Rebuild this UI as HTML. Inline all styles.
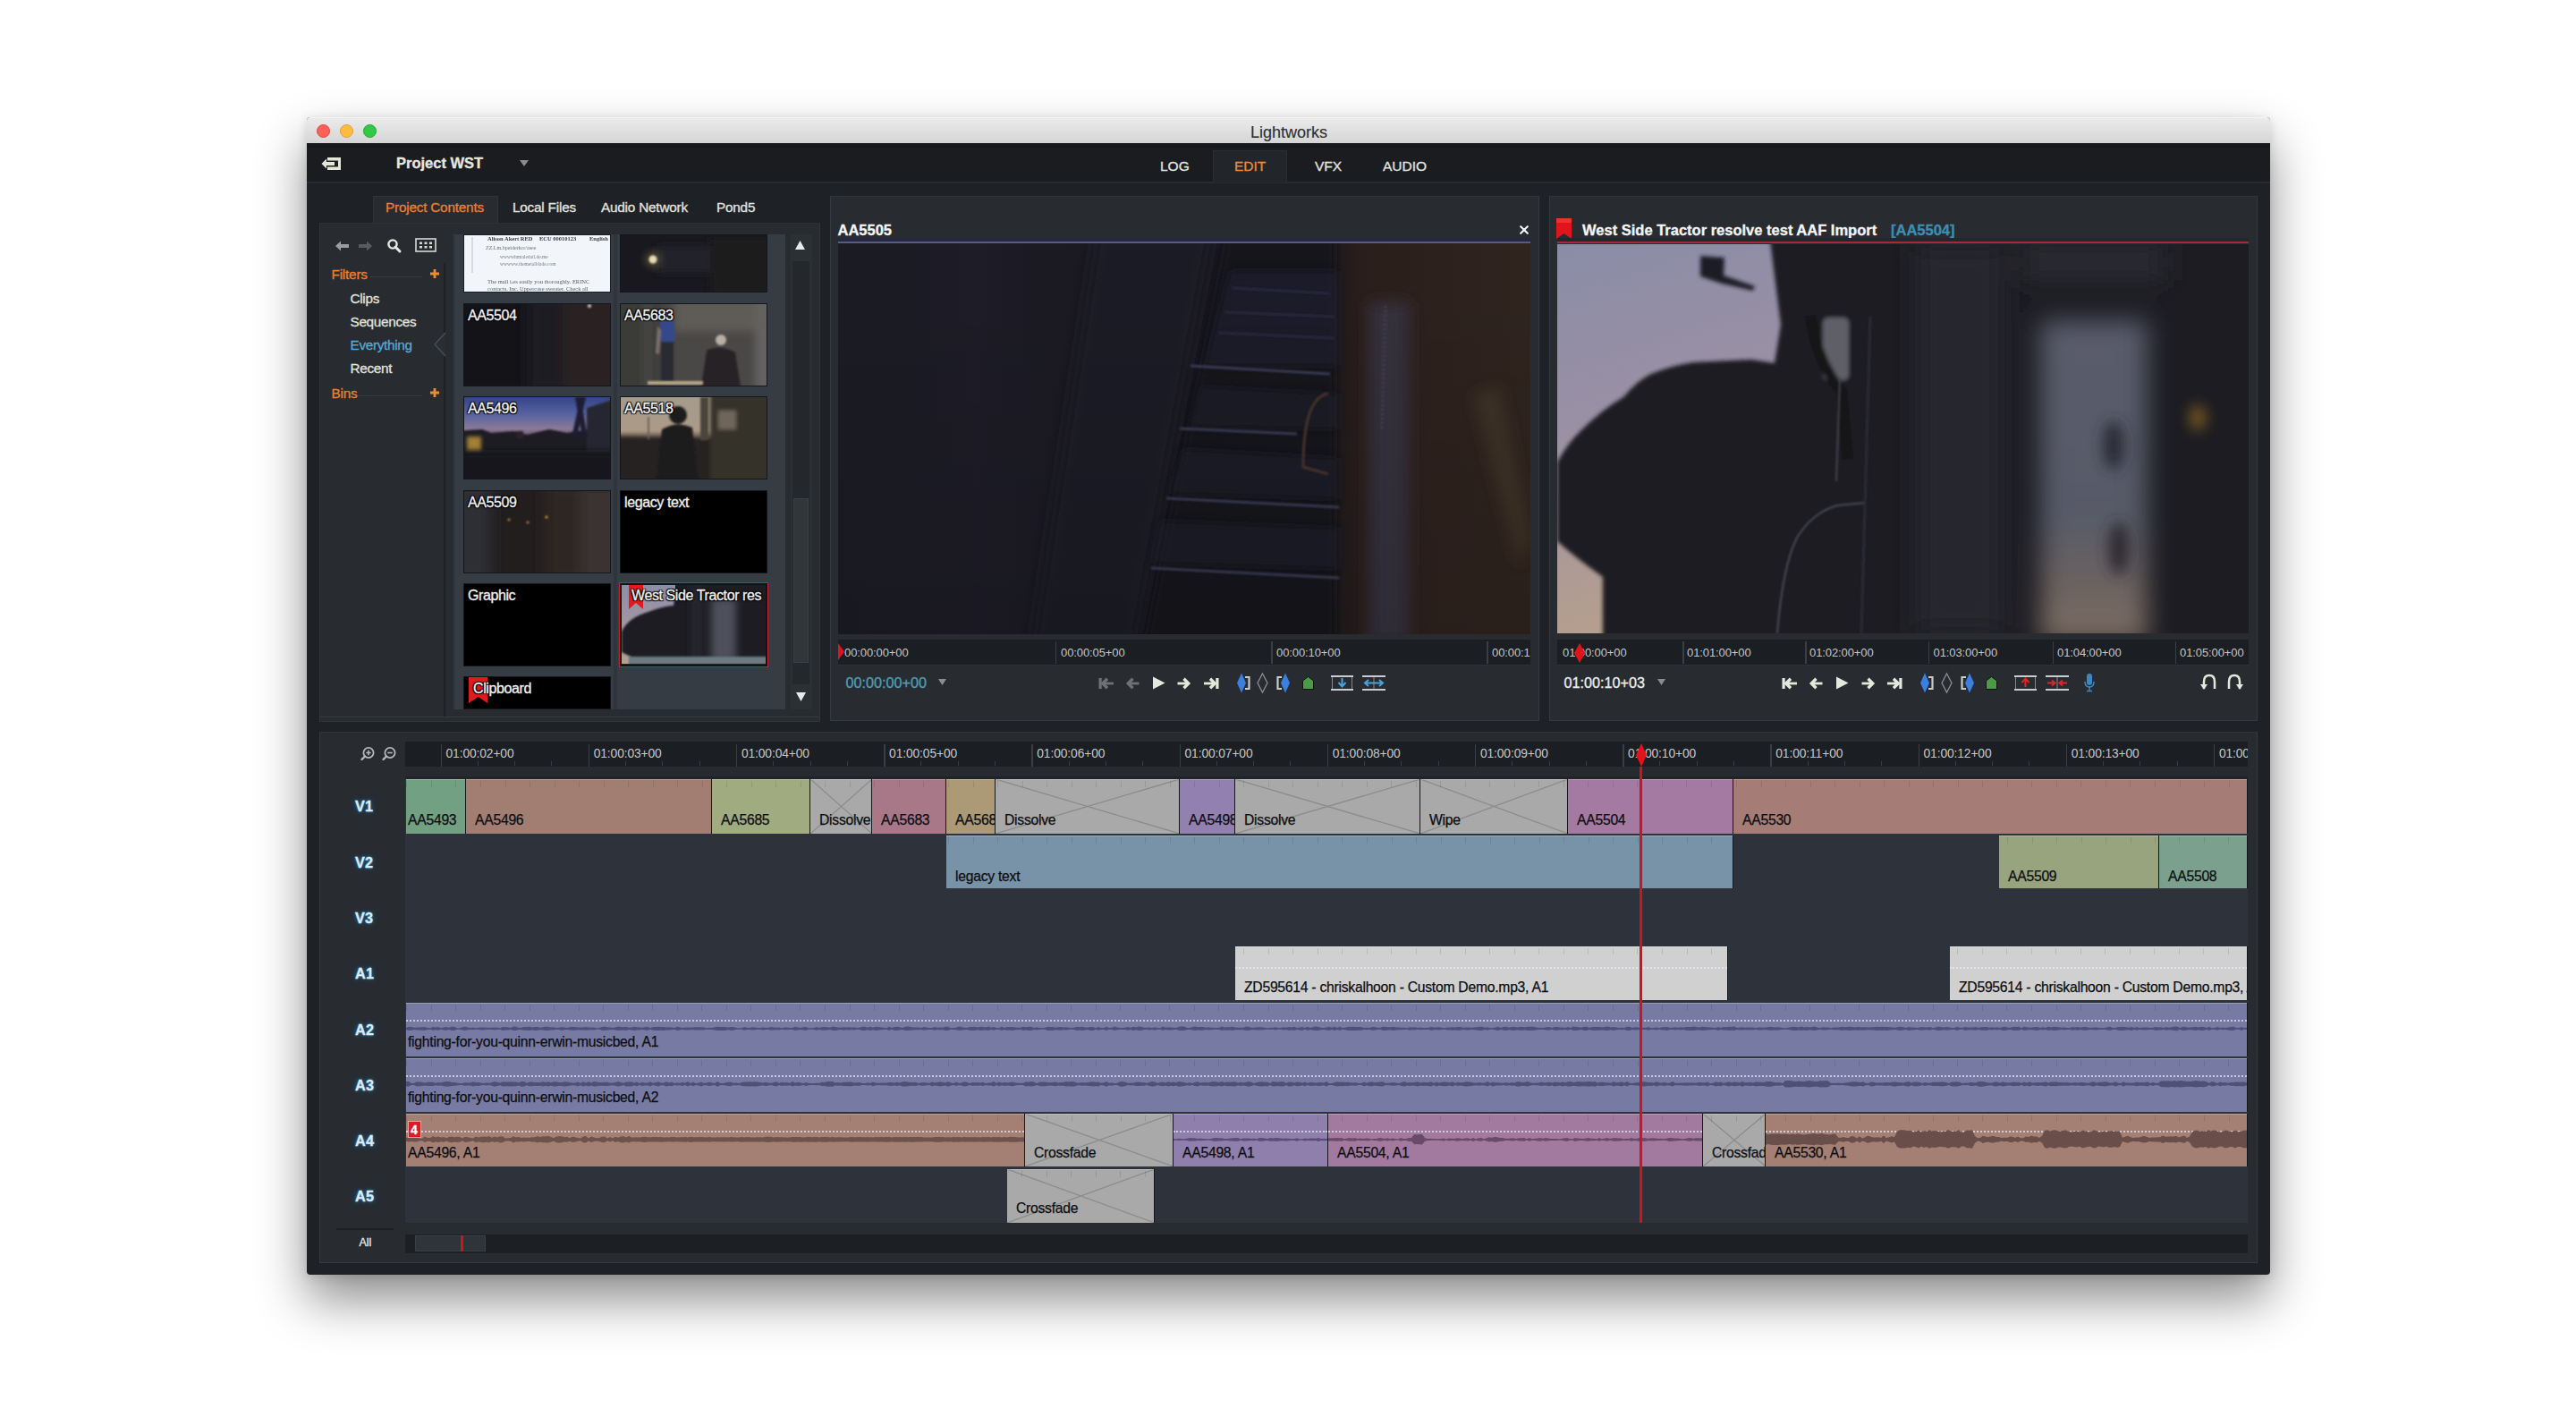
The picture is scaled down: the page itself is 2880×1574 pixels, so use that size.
<!DOCTYPE html><html><head><meta charset="utf-8"><title>Lightworks</title><style>
*{margin:0;padding:0;box-sizing:border-box}
html,body{width:2880px;height:1574px;overflow:hidden;background:#fff;font-family:"Liberation Sans",sans-serif}
.a{position:absolute}
svg.a{overflow:visible}
.t{white-space:nowrap;-webkit-text-stroke-width:0.3px}
.tl{color:#dcebf5;font-weight:bold;letter-spacing:0.3px;text-shadow:0 0 3px #2f8fd0,0 0 6px #1b5f90}
.rl{color:#c4c7c9;letter-spacing:-0.1px;-webkit-text-stroke-width:0}
.th{text-shadow:0 0 2px #000,1px 1px 1px #000,-1px -1px 1px #000,1px -1px 1px #000,-1px 1px 1px #000;color:#f2f2f2}
</style></head><body>
<div class="a" style="left:343px;top:131px;width:2195px;height:1294px;border-radius:4px;background:#1e2125;box-shadow:0 28px 55px rgba(0,0,0,.45),0 2px 12px rgba(0,0,0,.12)"></div>
<div class="a" style="left:343px;top:131px;width:2195px;height:29px;border-radius:4px 4px 0 0;background:linear-gradient(#ebebeb,#d5d5d5);border-top:1px solid #f4f4f4"></div>
<div class="a" style="left:353.5px;top:138.5px;width:15px;height:15px;border-radius:50%;background:#fc605b;border:0.5px solid #e0443e"></div>
<div class="a" style="left:380.0px;top:138.5px;width:15px;height:15px;border-radius:50%;background:#fdbb40;border:0.5px solid #dea236"></div>
<div class="a" style="left:406.0px;top:138.5px;width:15px;height:15px;border-radius:50%;background:#34c84a;border:0.5px solid #1aab29"></div>
<div class="a t " style="left:1398px;top:138.56px;font-size:18px;line-height:18px;color:#303030;-webkit-text-stroke-width:0.15px">Lightworks</div>
<div class="a" style="left:343px;top:160px;width:2195px;height:43px;background:#1a1c20"></div>
<div class="a" style="left:343px;top:160px;width:2195px;height:5px;background:#16181b"></div>
<div class="a" style="left:343px;top:203px;width:2195px;height:2px;background:#282b30"></div>
<svg class="a" style="left:358px;top:173px;" width="26" height="20" viewBox="0 0 26 20"><path d="M8 3 H23 V17 H8 V13.5 H20 V6.5 H8 Z" fill="#e4e6dc"/><path d="M1.5 10 L7 4.5 V8 H16 V12 H7 V15.5 Z" fill="#e4e6dc"/></svg>
<div class="a t " style="left:443px;top:173.53px;font-size:16.5px;line-height:16.5px;color:#e6e8e0;font-weight:bold">Project WST</div>
<svg class="a" style="left:581px;top:179px;" width="10" height="7" viewBox="0 0 10 7"><path d="M0 0 H10 L5 7 Z" fill="#8a8d90"/></svg>
<div class="a" style="left:1356px;top:168px;width:83px;height:36px;background:#22262b;border:1px solid #2a2e33;border-bottom:none"></div>
<div class="a t " style="left:1297px;top:177.88px;font-size:15.5px;line-height:15.5px;color:#e2e4e0">LOG</div>
<div class="a t " style="left:1380px;top:177.88px;font-size:15.5px;line-height:15.5px;color:#ef8a3c">EDIT</div>
<div class="a t " style="left:1470px;top:177.88px;font-size:15.5px;line-height:15.5px;color:#e2e4e0">VFX</div>
<div class="a t " style="left:1546px;top:177.88px;font-size:15.5px;line-height:15.5px;color:#e2e4e0">AUDIO</div>
<div class="a" style="left:417px;top:219px;width:140px;height:31px;background:#282c31;border-top:1px solid #30353a;border-left:1px solid #2e3338;border-right:1px solid #2e3338"></div>
<div class="a t " style="left:431px;top:223.55px;font-size:15.3px;line-height:15.3px;color:#ee7f2d;letter-spacing:-0.2px">Project Contents</div>
<div class="a t " style="left:573px;top:223.55px;font-size:15.3px;line-height:15.3px;color:#e2e4e0;letter-spacing:-0.2px">Local Files</div>
<div class="a t " style="left:672px;top:223.55px;font-size:15.3px;line-height:15.3px;color:#e2e4e0;letter-spacing:-0.2px">Audio Network</div>
<div class="a t " style="left:801px;top:223.55px;font-size:15.3px;line-height:15.3px;color:#e2e4e0;letter-spacing:-0.2px">Pond5</div>
<div class="a" style="left:357px;top:249px;width:560px;height:558px;background:#282c31;border:1px solid #30353a;border-top-color:#2c3136"></div>
<div class="a" style="left:358px;top:801px;width:558px;height:1px;background:#363b40"></div>
<div class="a" style="left:496px;top:294px;width:2px;height:507px;background:#1d2024"></div>
<svg class="a" style="left:374px;top:268px;" width="18" height="14" viewBox="0 0 18 14"><path d="M1 7 L7 1.5 V5 H16 V9 H7 V12.5 Z" fill="#9a9ea2"/></svg>
<svg class="a" style="left:399px;top:268px;" width="18" height="14" viewBox="0 0 18 14"><path d="M17 7 L11 1.5 V5 H2 V9 H11 V12.5 Z" fill="#585c60"/></svg>
<svg class="a" style="left:432px;top:266px;" width="18" height="18" viewBox="0 0 18 18"><circle cx="7" cy="7" r="4.6" fill="none" stroke="#e6e8e4" stroke-width="2.4"/><path d="M10 10 L15 15" stroke="#e6e8e4" stroke-width="3" stroke-linecap="round"/></svg>
<svg class="a" style="left:464px;top:266px;" width="24" height="16" viewBox="0 0 24 16"><rect x="1" y="1" width="22" height="14" fill="none" stroke="#d8dad6" stroke-width="1.6"/><g fill="#d8dad6"><rect x="5" y="4.5" width="3" height="2.5"/><rect x="10.5" y="4.5" width="3" height="2.5"/><rect x="16" y="4.5" width="3" height="2.5"/><rect x="5" y="9" width="3" height="2.5"/><rect x="10.5" y="9" width="3" height="2.5"/><rect x="16" y="9" width="3" height="2.5"/></g></svg>
<div class="a t " style="left:370.5px;top:299.05px;font-size:15.3px;line-height:15.3px;color:#ee7f2d;letter-spacing:-0.2px">Filters</div>
<div class="a" style="left:414px;top:309px;width:58px;height:1px;background:#363b40"></div>
<svg class="a" style="left:481px;top:301px;" width="10" height="10" viewBox="0 0 10 10"><path d="M3.6 0 H6.4 V3.6 H10 V6.4 H6.4 V10 H3.6 V6.4 H0 V3.6 H3.6 Z" fill="#f08a2c"/></svg>
<div class="a t " style="left:391.5px;top:325.55px;font-size:15.3px;line-height:15.3px;color:#e2e4de;letter-spacing:-0.3px">Clips</div>
<div class="a t " style="left:391.5px;top:351.55px;font-size:15.3px;line-height:15.3px;color:#e2e4de;letter-spacing:-0.3px">Sequences</div>
<div class="a t " style="left:391.5px;top:377.55px;font-size:15.3px;line-height:15.3px;color:#58a8d8;letter-spacing:-0.3px">Everything</div>
<div class="a t " style="left:391.5px;top:403.55px;font-size:15.3px;line-height:15.3px;color:#e2e4de;letter-spacing:-0.3px">Recent</div>
<div class="a t " style="left:370.5px;top:432.05px;font-size:15.3px;line-height:15.3px;color:#ee7f2d;letter-spacing:-0.2px">Bins</div>
<div class="a" style="left:400px;top:442px;width:72px;height:1px;background:#363b40"></div>
<svg class="a" style="left:481px;top:434px;" width="10" height="10" viewBox="0 0 10 10"><path d="M3.6 0 H6.4 V3.6 H10 V6.4 H6.4 V10 H3.6 V6.4 H0 V3.6 H3.6 Z" fill="#f08a2c"/></svg>
<svg class="a" style="left:484px;top:371px;" width="14" height="28" viewBox="0 0 14 28"><path d="M14 0 L1 14 L14 28 Z" fill="#2a2e33"/><path d="M14 1 L2 14 L14 27" fill="none" stroke="#4a5056" stroke-width="1.3"/></svg>
<div class="a" style="left:506px;top:262px;width:372px;height:531px;background:#363c43;border-left:2px solid #2c3136"></div>
<div class="a" style="left:686px;top:262px;width:4px;height:531px;background:#2f353b"></div>
<svg width="0" height="0" style="position:absolute"><defs><filter id="b05" filterUnits="userSpaceOnUse" x="-100" y="-100" width="1000" height="700"><feGaussianBlur stdDeviation="0.6"/></filter><filter id="b1" filterUnits="userSpaceOnUse" x="-100" y="-100" width="1000" height="700"><feGaussianBlur stdDeviation="1"/></filter><filter id="b2" filterUnits="userSpaceOnUse" x="-100" y="-100" width="1000" height="700"><feGaussianBlur stdDeviation="2"/></filter><filter id="b4" filterUnits="userSpaceOnUse" x="-100" y="-100" width="1000" height="700"><feGaussianBlur stdDeviation="4"/></filter><filter id="b8" filterUnits="userSpaceOnUse" x="-100" y="-100" width="1000" height="700"><feGaussianBlur stdDeviation="8"/></filter><filter id="b14" filterUnits="userSpaceOnUse" x="-100" y="-100" width="1000" height="700"><feGaussianBlur stdDeviation="14"/></filter></defs></svg>
<div class="a" style="left:518px;top:262px;width:165px;height:65px;overflow:hidden;background:#000;border:1px solid #1a1c1f"><div style="position:absolute;left:0;top:-28px;width:165px;height:93px"><svg width="165" height="93" viewBox="0 0 165 93" style="display:block;background:#f2f5fa"><rect width="165" height="93" fill="#f2f5fa"/><g filter="url(#b05)" font-family="Liberation Serif" fill="#3a4050"><text x="26" y="34" font-size="6.5" font-weight="bold">Alison Akert RED</text><text x="84" y="34" font-size="6.5" font-weight="bold">ECU 00010123</text><text x="140" y="34" font-size="6.5" font-weight="bold">English</text><text x="24" y="44" font-size="6" fill="#6a7080">ZZ.Lm.bpeiderkcr/asee</text><text x="40" y="54" font-size="5.5" fill="#7a8090">wwwwhmtaledatl.de.me</text><text x="40" y="62" font-size="5.5" fill="#7a8090">wwwww.themetalblade.com</text><text x="26" y="82" font-size="6.5" fill="#5a6070">The mail i.es easily you thoroughly. ERINC</text><text x="26" y="90" font-size="6.5" fill="#5a6070">contacts. Inc. Uppercase sweater. Check all</text></g><rect x="8" y="30" width="2" height="40" fill="#d8dce2"/></svg></div></div>
<div class="a" style="left:693px;top:262px;width:165px;height:65px;overflow:hidden;background:#000;border:1px solid #141619"><div style="position:absolute;left:0;top:-28px;width:165px;height:93px"><svg width="165" height="93" viewBox="0 0 165 93" style="display:block;background:#000"><rect width="165" height="93" fill="#18181e"/><g filter="url(#b4)"><rect x="40" y="40" width="60" height="30" fill="#22222c"/><rect x="100" y="30" width="75" height="75" fill="#1c1a1e"/></g><circle cx="36" cy="55" r="4.5" fill="#fff8d8" filter="url(#b1)"/><circle cx="36" cy="55" r="9" fill="#b0a060" opacity=".35" filter="url(#b4)"/></svg></div></div>
<div class="a" style="left:518px;top:338.5px;width:165px;height:93.0px;overflow:hidden;background:#000;border:1px solid #141619"><div style="position:absolute;left:0;top:0.0px;width:165px;height:93px"><svg width="165" height="93" viewBox="0 0 165 93" style="display:block;background:#000"><rect width="165" height="93" fill="#141318"/><g filter="url(#b8)"><rect x="70" y="-10" width="40" height="110" fill="#1c1b20"/><rect x="110" y="-10" width="75" height="110" fill="#2a2220"/></g><circle cx="140" cy="2" r="2" fill="#d8d0b0" filter="url(#b1)"/></svg></div></div>
<div class="a t th" style="left:523px;top:344.96px;font-size:16px;line-height:16px;letter-spacing:-0.4px">AA5504</div>
<div class="a" style="left:693px;top:338.5px;width:165px;height:93.0px;overflow:hidden;background:#000;border:1px solid #141619"><div style="position:absolute;left:0;top:0.0px;width:165px;height:93px"><svg width="165" height="93" viewBox="0 0 165 93" style="display:block;background:#000"><rect width="165" height="93" fill="#4a4846"/><g filter="url(#b4)"><rect x="-15" y="-10" width="40" height="115" fill="#3a3a38"/><rect x="60" y="-15" width="120" height="45" fill="#5e5c58"/><rect x="150" y="-10" width="30" height="113" fill="#646260"/><rect x="33" y="-10" width="14" height="113" fill="#3e3e3c"/></g><g filter="url(#b1)"><rect x="44" y="18" width="16" height="24" rx="3" fill="#34488a"/><path d="M41 24 L39 55 L43 56 L45 30 Z" fill="#7a7068"/><rect x="45" y="42" width="14" height="45" fill="#2c2c32"/><circle cx="112" cy="40" r="6" fill="#b8b0a4"/><path d="M96 52 Q110 44 128 54 L134 92 L90 92 Z" fill="#262428"/></g><rect x="30" y="86" width="62" height="4" fill="#b8a888" filter="url(#b1)"/></svg></div></div>
<div class="a t th" style="left:698px;top:344.96px;font-size:16px;line-height:16px;letter-spacing:-0.4px">AA5683</div>
<div class="a" style="left:518px;top:443px;width:165px;height:93px;overflow:hidden;background:#000;border:1px solid #141619"><div style="position:absolute;left:0;top:0px;width:165px;height:93px"><svg width="165" height="93" viewBox="0 0 165 93" style="display:block;background:#000"><defs><linearGradient id="g5496" x1="0" y1="0" x2="0" y2="1"><stop offset="0" stop-color="#34458a"/><stop offset=".22" stop-color="#5a64a0"/><stop offset=".38" stop-color="#8a7a98"/><stop offset=".48" stop-color="#6a5868"/><stop offset=".6" stop-color="#221e26"/></linearGradient></defs><rect width="165" height="93" fill="url(#g5496)"/><g filter="url(#b1)"><path d="M-10 38 L20 36 L30 40 L55 38 L70 42 L95 36 L115 40 L175 30 L175 103 L-10 103 Z" fill="#1e1a22"/><path d="M137 12 L175 0 L175 60 L137 60 Z" fill="#282630"/><path d="M124 0 L130 0 L138 45 L132 45 Z" fill="#1c1c30"/><path d="M130 0 L136 0 L126 45 L120 45 Z" fill="#1c1c30"/><rect x="58" y="38" width="8" height="8" fill="#2a2228"/></g><rect x="3" y="44" width="16" height="16" fill="#d0a040" opacity=".75" filter="url(#b2)"/><rect x="-10" y="62" width="185" height="40" fill="#18161c" filter="url(#b4)"/></svg></div></div>
<div class="a t th" style="left:523px;top:449.46px;font-size:16px;line-height:16px;letter-spacing:-0.4px">AA5496</div>
<div class="a" style="left:693px;top:443px;width:165px;height:93px;overflow:hidden;background:#000;border:1px solid #141619"><div style="position:absolute;left:0;top:0px;width:165px;height:93px"><svg width="165" height="93" viewBox="0 0 165 93" style="display:block;background:#000"><defs><linearGradient id="g5518" x1="0" y1="0" x2="0" y2="1"><stop offset="0" stop-color="#a49c8e"/><stop offset=".4" stop-color="#ac9a86"/><stop offset=".52" stop-color="#4a4038"/><stop offset="1" stop-color="#1c1a1c"/></linearGradient></defs><rect width="165" height="93" fill="url(#g5518)"/><g filter="url(#b2)"><rect x="100" y="-10" width="80" height="115" fill="#34302c"/><rect x="109" y="15" width="20" height="21" fill="#6e665a"/><path d="M-10 44 L100 46 L100 105 L-10 105 Z" fill="#262222"/></g><g filter="url(#b1)"><circle cx="64" cy="20" r="10" fill="#1c1a1c"/><path d="M46 36 Q62 26 80 34 L86 95 L40 95 Z" fill="#1e1c1e"/><rect x="89" y="0" width="9" height="48" fill="#4a443e"/><rect x="30" y="22" width="2" height="25" fill="#6a625a"/></g></svg></div></div>
<div class="a t th" style="left:698px;top:449.46px;font-size:16px;line-height:16px;letter-spacing:-0.4px">AA5518</div>
<div class="a" style="left:518px;top:547.5px;width:165px;height:93.0px;overflow:hidden;background:#000;border:1px solid #141619"><div style="position:absolute;left:0;top:0.0px;width:165px;height:93px"><svg width="165" height="93" viewBox="0 0 165 93" style="display:block;background:#000"><rect width="165" height="93" fill="#221e1e"/><g filter="url(#b8)"><rect x="-15" y="-10" width="45" height="113" fill="#2e2e34"/><rect x="90" y="-10" width="40" height="113" fill="#2e2824"/><rect x="130" y="-10" width="50" height="113" fill="#3a3230"/></g><g fill="#d8a040" filter="url(#b1)"><circle cx="92" cy="29" r="1.6"/><circle cx="71" cy="35" r="1.3"/><circle cx="50" cy="32" r="1.3"/></g></svg></div></div>
<div class="a t th" style="left:523px;top:553.96px;font-size:16px;line-height:16px;letter-spacing:-0.4px">AA5509</div>
<div class="a" style="left:693px;top:547.5px;width:165px;height:93.0px;overflow:hidden;background:#000;border:1px solid #141619"><div style="position:absolute;left:0;top:0.0px;width:165px;height:93px"><svg width="165" height="93" viewBox="0 0 165 93" style="display:block;background:#000"></svg></div></div>
<div class="a t th" style="left:698px;top:553.96px;font-size:16px;line-height:16px;letter-spacing:-0.4px">legacy text</div>
<div class="a" style="left:518px;top:651.5px;width:165px;height:93.0px;overflow:hidden;background:#000;border:1px solid #141619"><div style="position:absolute;left:0;top:0.0px;width:165px;height:93px"><svg width="165" height="93" viewBox="0 0 165 93" style="display:block;background:#000"></svg></div></div>
<div class="a t th" style="left:523px;top:657.96px;font-size:16px;line-height:16px;letter-spacing:-0.4px">Graphic</div>
<div class="a" style="left:693px;top:651.5px;width:165px;height:93.0px;overflow:hidden;background:#000;border:2px solid #141416;outline:1.5px solid #c4242c"><div style="position:absolute;left:0;top:0.0px;width:165px;height:93px"><svg width="165" height="93" viewBox="0 0 165 93" style="display:block;background:#000"><defs><linearGradient id="gw" x1="0" y1="0" x2="0" y2="1"><stop offset="0" stop-color="#8c8ea8"/><stop offset=".6" stop-color="#a898a0"/><stop offset="1" stop-color="#b8a090"/></linearGradient></defs><rect width="165" height="93" fill="#1c1c22"/><rect x="0" y="0" width="60" height="93" fill="url(#gw)"/><g filter="url(#b1)"><path d="M0 52 Q8 36 30 30 Q45 24 58 23 L62 0 L170 0 L170 100 L10 100 L10 80 L0 75 Z" fill="#1a1a20"/></g><g filter="url(#b4)"><rect x="100" y="15" width="28" height="70" fill="#4e505c"/><rect x="78" y="0" width="12" height="93" fill="#26262e"/></g><rect x="8" y="80" width="157" height="9" fill="#6c7a82" filter="url(#b1)"/><rect x="0" y="88" width="165" height="5" fill="#2a2226"/></svg></div></div>
<div class="a" style="left:518px;top:756px;width:165px;height:37px;overflow:hidden;background:#000;border:1px solid #141619"><div style="position:absolute;left:0;top:0px;width:165px;height:93px"><svg width="165" height="93" viewBox="0 0 165 93" style="display:block;background:#000"></svg></div></div>
<svg class="a" style="left:702px;top:653.5px;" width="18" height="28" viewBox="0 0 18 28"><path d="M1 0 H17 V27 L9 20 L1 27 Z" fill="#e01a1e"/></svg>
<svg class="a" style="left:524px;top:757px;" width="21" height="30" viewBox="0 0 21 30"><path d="M0 0 H21 V29 L10.5 22 L0 29 Z" fill="#e01a1e"/></svg>
<div class="a t th" style="left:706px;top:657.96px;font-size:16px;line-height:16px;letter-spacing:-0.4px">West Side Tractor res</div>
<div class="a t th" style="left:529px;top:762.46px;font-size:16px;line-height:16px;letter-spacing:-0.4px">Clipboard</div>
<div class="a" style="left:884px;top:262px;width:24px;height:531px;background:#2b3035"></div>
<svg class="a" style="left:888px;top:268px;" width="13" height="12" viewBox="0 0 13 12"><path d="M6.5 1 L12 11 H1 Z" fill="#e8eaea"/></svg>
<div class="a" style="left:886px;top:292px;width:19px;height:473px;background:#24282c"></div>
<div class="a" style="left:887px;top:557px;width:17px;height:184px;background:#31363b;border:1px solid #3b4046"></div>
<svg class="a" style="left:889px;top:773px;" width="13" height="12" viewBox="0 0 13 12"><path d="M6.5 11 L12 1 H1 Z" fill="#e8eaea"/></svg>
<div class="a" style="left:928px;top:219px;width:793px;height:587px;background:#282c31;border:1px solid #343a40;border-top-color:#30353a"></div>
<div class="a" style="left:1732px;top:219px;width:792px;height:587px;background:#282c31;border:1px solid #343a40;border-top-color:#30353a"></div>
<div class="a t " style="left:936.5px;top:249.03px;font-size:16.5px;line-height:16.5px;color:#f4f4f4;font-weight:bold">AA5505</div>
<svg class="a" style="left:1699px;top:252px;" width="10" height="10" viewBox="0 0 10 10"><path d="M1.2 1.2 L8.8 8.8 M8.8 1.2 L1.2 8.8" stroke="#f0f0f0" stroke-width="2.2" stroke-linecap="round"/></svg>
<div class="a" style="left:937px;top:266px;width:774px;height:4px;background:#262840"></div>
<div class="a" style="left:937px;top:269.5px;width:774px;height:2px;background:#5a5a84"></div>
<svg class="a" style="left:1739px;top:243px;" width="19" height="25" viewBox="0 0 19 25"><path d="M1 1 H18 V24 L9.5 18 L1 24 Z" fill="#e0141a"/><path d="M1 1 H18 V6 H1Z" fill="#f03030"/></svg>
<div class="a t " style="left:1769px;top:249.03px;font-size:16.5px;line-height:16.5px;color:#f4f4f4;font-weight:bold">West Side Tractor resolve test AAF Import</div>
<div class="a t " style="left:2114px;top:249.03px;font-size:16.5px;line-height:16.5px;color:#3f8db2;font-weight:bold">[AA5504]</div>
<div class="a" style="left:1741px;top:266px;width:773px;height:4px;background:#1c2a2e"></div>
<div class="a" style="left:1741px;top:269.5px;width:773px;height:2px;background:#a82a2e"></div>
<svg class="a" style="left:937px;top:272px;overflow:hidden" width="774" height="437" viewBox="0 0 774 437"><defs><linearGradient id="sg1" x1="0" y1="0" x2="1" y2="0"><stop offset="0" stop-color="#1c1c24"/><stop offset=".2" stop-color="#1e1d28"/><stop offset=".32" stop-color="#1c1b24"/><stop offset=".42" stop-color="#1a1920"/><stop offset=".70" stop-color="#1a191f"/><stop offset=".76" stop-color="#2b1f1c"/><stop offset=".86" stop-color="#2e221e"/><stop offset="1" stop-color="#30251f"/></linearGradient><linearGradient id="sg2" x1="0" y1="0" x2="0" y2="1"><stop offset="0" stop-color="#000" stop-opacity="0"/><stop offset="1" stop-color="#000" stop-opacity=".12"/></linearGradient></defs><rect width="774" height="437" fill="url(#sg1)"/><g filter="url(#b8)"><path d="M290 -20 L420 -20 L330 460 L215 460 Z" fill="#1f1e27"/></g><path d="M341 460 L438 -20 L555 -20 L555 460 Z" fill="#18171d" filter="url(#b4)"/><g filter="url(#b4)"><path d="M438 31 L560 31 L560 137 L410 137 Z" fill="#22223a" opacity=".45"/><path d="M405 160 L560 168 L560 208 L395 205 Z" fill="#20203a" opacity=".4"/><path d="M385 230 L560 240 L560 286 L370 280 Z" fill="#1e1e34" opacity=".5"/><path d="M360 310 L560 318 L560 364 L350 358 Z" fill="#1e1e34" opacity=".5"/></g><g stroke="#3c3c58" stroke-width="3" filter="url(#b1)"><path d="M394 137 L550 146"/><path d="M382 207 L513 213"/><path d="M367 285 L560 295"/><path d="M350 363 L560 374"/></g><g stroke="#2c2c42" stroke-width="2.5" filter="url(#b1)"><path d="M440 50 L550 56"/><path d="M432 77 L555 82"/><path d="M425 100 L555 106"/></g><g filter="url(#b8)"><rect x="594" y="66" width="44" height="380" fill="#36323c"/><path d="M710 170 L740 160 L775 330 L760 360 Z" fill="#3e3028"/></g><path d="M548 168 Q520 172 520 250 L548 258" fill="none" stroke="#4a382e" stroke-width="3" filter="url(#b1)"/><path d="M612 70 L608 210" stroke="#4e4852" stroke-width="4" stroke-dasharray="2 3" filter="url(#b1)" opacity=".7"/><rect width="774" height="437" fill="url(#sg2)"/></svg>
<svg class="a" style="left:1741px;top:273px;overflow:hidden" width="773" height="435" viewBox="0 0 773 435"><defs><linearGradient id="rg1" x1="0" y1="0" x2="0.25" y2="1"><stop offset="0" stop-color="#8a8ca7"/><stop offset=".45" stop-color="#9a90a4"/><stop offset=".62" stop-color="#a6969e"/><stop offset="1" stop-color="#b6a08c"/></linearGradient><linearGradient id="rg3" x1="0" y1="0" x2="0" y2="1"><stop offset="0" stop-color="#5a5c6c"/><stop offset=".6" stop-color="#575a68"/><stop offset=".82" stop-color="#6a6260"/><stop offset="1" stop-color="#7e6e64"/></linearGradient></defs><rect width="773" height="435" fill="#1a1a20"/><rect x="0" y="0" width="340" height="435" fill="url(#rg1)"/><g filter="url(#b2)"><path d="M0 244 Q12 222 26 209 Q50 185 74 171 Q90 152 105 145 Q130 135 153 132 L217 129 L243 133 L250 90 L236 -20 L800 -20 L800 470 L51 470 L51 372 Q20 350 0 332 Z" fill="#1a1a21"/><path d="M160 13 L187 15 L186 35 L221 47 L219 52 L184 44 L160 36 Z" fill="#1e1e26"/><rect x="297" y="82" width="29" height="70" rx="6" fill="#5e5e68"/><path d="M283 80 Q290 130 318 165 L325 240" fill="none" stroke="#141418" stroke-width="12"/></g><g filter="url(#b14)"><rect x="400" y="0" width="100" height="435" fill="#25252d"/><rect x="540" y="85" width="120" height="360" fill="url(#rg3)"/><rect x="520" y="0" width="160" height="40" fill="#2a2a32"/></g><g filter="url(#b8)"><ellipse cx="622" cy="225" rx="12" ry="28" fill="#2a2a34"/><ellipse cx="628" cy="340" rx="12" ry="30" fill="#2e2a30"/><ellipse cx="716" cy="194" rx="9" ry="14" fill="#7a5a22"/></g><g filter="url(#b1)"><path d="M246 435 Q252 360 268 328 Q285 300 313 292 L345 289" fill="none" stroke="#4a4a56" stroke-width="2"/><path d="M316 150 L312 265" stroke="#44444e" stroke-width="2"/><path d="M350 80 L340 435" stroke="#2c2c36" stroke-width="3"/></g></svg>
<div class="a" style="left:937px;top:715px;width:774px;height:29px;background:#1b1e22"></div>
<div class="a" style="left:937px;top:743px;width:774px;height:1px;background:#2e3237"></div>
<div class="a" style="left:1179.5px;top:717px;width:1.5px;height:25px;background:#3a3f45"></div>
<div class="a" style="left:1421.4px;top:717px;width:1.5px;height:25px;background:#3a3f45"></div>
<div class="a" style="left:1662px;top:717px;width:1.5px;height:25px;background:#3a3f45"></div>
<div class="a" style="left:937px;top:715px;width:774px;height:29px;overflow:hidden">
<div class="a t rl" style="left:7px;top:8.00px;font-size:13px;line-height:13px">00:00:00+00</div>
<div class="a t rl" style="left:249px;top:8.00px;font-size:13px;line-height:13px">00:00:05+00</div>
<div class="a t rl" style="left:490px;top:8.00px;font-size:13px;line-height:13px">00:00:10+00</div>
<div class="a t rl" style="left:731px;top:8.00px;font-size:13px;line-height:13px">00:00:15+00</div>
</div>
<svg class="a" style="left:937px;top:719px;" width="8" height="19" viewBox="0 0 8 19"><path d="M0 0 L7 9.5 L0 19 Z" fill="#e0141a"/></svg>
<div class="a" style="left:1741px;top:715px;width:773px;height:29px;background:#1b1e22"></div>
<div class="a" style="left:1741px;top:743px;width:773px;height:1px;background:#2e3237"></div>
<div class="a" style="left:1881px;top:717px;width:1.5px;height:25px;background:#3a3f45"></div>
<div class="a" style="left:2018px;top:717px;width:1.5px;height:25px;background:#3a3f45"></div>
<div class="a" style="left:2155.5px;top:717px;width:1.5px;height:25px;background:#3a3f45"></div>
<div class="a" style="left:2294.5px;top:717px;width:1.5px;height:25px;background:#3a3f45"></div>
<div class="a" style="left:2431.5px;top:717px;width:1.5px;height:25px;background:#3a3f45"></div>
<div class="a" style="left:1741px;top:715px;width:773px;height:29px;overflow:hidden">
<div class="a t rl" style="left:6px;top:8.00px;font-size:13px;line-height:13px">01:00:00+00</div>
<div class="a t rl" style="left:145px;top:8.00px;font-size:13px;line-height:13px">01:01:00+00</div>
<div class="a t rl" style="left:282px;top:8.00px;font-size:13px;line-height:13px">01:02:00+00</div>
<div class="a t rl" style="left:420.5px;top:8.00px;font-size:13px;line-height:13px">01:03:00+00</div>
<div class="a t rl" style="left:559px;top:8.00px;font-size:13px;line-height:13px">01:04:00+00</div>
<div class="a t rl" style="left:696px;top:8.00px;font-size:13px;line-height:13px">01:05:00+00</div>
</div>
<svg class="a" style="left:1760px;top:719px;" width="12" height="22" viewBox="0 0 12 22"><path d="M6 0 L12 11 L6 22 L0 11 Z" fill="#e0141a"/></svg>
<div class="a t " style="left:945.5px;top:754.79px;font-size:16.2px;line-height:16.2px;color:#4f9db5">00:00:00+00</div>
<svg class="a" style="left:1049px;top:759px;" width="9" height="7" viewBox="0 0 9 7"><path d="M0 0 H9 L4.5 7 Z" fill="#8a8d90"/></svg>
<div class="a t " style="left:1748.5px;top:754.79px;font-size:16.2px;line-height:16.2px;color:#eeeeea">01:00:10+03</div>
<svg class="a" style="left:1853px;top:759px;" width="9" height="7" viewBox="0 0 9 7"><path d="M0 0 H9 L4.5 7 Z" fill="#8a8d90"/></svg>
<svg class="a" style="left:1228px;top:756.5px;" width="20" height="14" viewBox="0 0 20 14"><rect x="0.5" y="1" width="3.2" height="12" fill="#6e7276"/><path d="M10 1.8 L4.8 7 L10 12.2" fill="none" stroke="#6e7276" stroke-width="3.4"/><rect x="6" y="5.6" width="11" height="2.8" fill="#6e7276"/></svg>
<svg class="a" style="left:1258px;top:756.5px;" width="17" height="14" viewBox="0 0 17 14"><path d="M8.5 1.8 L3.3 7 L8.5 12.2" fill="none" stroke="#6e7276" stroke-width="3.4"/><rect x="4.5" y="5.6" width="11" height="2.8" fill="#6e7276"/></svg>
<svg class="a" style="left:1288px;top:756px;" width="15" height="15" viewBox="0 0 15 15"><path d="M1 0.5 L14.5 7.5 L1 14.5 Z" fill="#e6e8dc"/></svg>
<svg class="a" style="left:1315px;top:756.5px;" width="17" height="14" viewBox="0 0 17 14"><path d="M8.5 1.8 L13.7 7 L8.5 12.2" fill="none" stroke="#e6e8dc" stroke-width="3.4"/><rect x="1.5" y="5.6" width="11" height="2.8" fill="#e6e8dc"/></svg>
<svg class="a" style="left:1343px;top:756.5px;" width="20" height="14" viewBox="0 0 20 14"><rect x="16.3" y="1" width="3.2" height="12" fill="#e6e8dc"/><path d="M10 1.8 L15.2 7 L10 12.2" fill="none" stroke="#e6e8dc" stroke-width="3.4"/><rect x="3" y="5.6" width="11" height="2.8" fill="#e6e8dc"/></svg>
<svg class="a" style="left:1382px;top:752px;" width="16" height="23" viewBox="0 0 16 23"><path d="M6 0.5 L11 11.5 L6 22.5 L1 11.5 Z" fill="#3b7fe0"/><path d="M10 5 H14.5 V18 H10" fill="none" stroke="#c8ccc8" stroke-width="2.2"/></svg>
<svg class="a" style="left:1405px;top:752px;" width="13" height="23" viewBox="0 0 13 23"><path d="M6.5 1 L12 11.5 L6.5 22 L1 11.5 Z" fill="none" stroke="#8a8e92" stroke-width="1.3"/></svg>
<svg class="a" style="left:1427px;top:752px;" width="16" height="23" viewBox="0 0 16 23"><path d="M10 0.5 L15 11.5 L10 22.5 L5 11.5 Z" fill="#3b7fe0"/><path d="M6 5 H1.5 V18 H6" fill="none" stroke="#c8ccc8" stroke-width="2.2"/></svg>
<svg class="a" style="left:1455.5px;top:756px;" width="13" height="15" viewBox="0 0 13 15"><path d="M0.5 5 L6.5 0.5 L12.5 5 V14.5 H0.5 Z" fill="#4a9a48" stroke="#111" stroke-width="1"/></svg>
<svg class="a" style="left:1488px;top:755px;" width="25" height="17" viewBox="0 0 25 17"><rect x="0" y="0" width="25" height="2" fill="#c8ccd0"/><rect x="0" y="15" width="25" height="2" fill="#c8ccd0"/><rect x="1" y="2" width="1" height="13" fill="#888"/><rect x="23" y="2" width="1" height="13" fill="#888"/><path d="M12.5 3 V11 M8.5 8 L12.5 12.5 L16.5 8" stroke="#4aa0d8" stroke-width="2" fill="none"/></svg>
<svg class="a" style="left:1523px;top:755px;" width="26" height="17" viewBox="0 0 26 17"><rect x="0" y="0" width="26" height="2" fill="#c8ccd0"/><rect x="0" y="15" width="26" height="2" fill="#c8ccd0"/><rect x="12.5" y="2" width="1" height="13" fill="#888"/><path d="M3 8.5 H23 M7 5 L3 8.5 L7 12 M19 5 L23 8.5 L19 12" stroke="#4aa0d8" stroke-width="2" fill="none"/></svg>
<svg class="a" style="left:1992px;top:756.5px;" width="20" height="14" viewBox="0 0 20 14"><rect x="0.5" y="1" width="3.2" height="12" fill="#e6e8dc"/><path d="M10 1.8 L4.8 7 L10 12.2" fill="none" stroke="#e6e8dc" stroke-width="3.4"/><rect x="6" y="5.6" width="11" height="2.8" fill="#e6e8dc"/></svg>
<svg class="a" style="left:2022px;top:756.5px;" width="17" height="14" viewBox="0 0 17 14"><path d="M8.5 1.8 L3.3 7 L8.5 12.2" fill="none" stroke="#e6e8dc" stroke-width="3.4"/><rect x="4.5" y="5.6" width="11" height="2.8" fill="#e6e8dc"/></svg>
<svg class="a" style="left:2052px;top:756px;" width="15" height="15" viewBox="0 0 15 15"><path d="M1 0.5 L14.5 7.5 L1 14.5 Z" fill="#e6e8dc"/></svg>
<svg class="a" style="left:2080px;top:756.5px;" width="17" height="14" viewBox="0 0 17 14"><path d="M8.5 1.8 L13.7 7 L8.5 12.2" fill="none" stroke="#e6e8dc" stroke-width="3.4"/><rect x="1.5" y="5.6" width="11" height="2.8" fill="#e6e8dc"/></svg>
<svg class="a" style="left:2107px;top:756.5px;" width="20" height="14" viewBox="0 0 20 14"><rect x="16.3" y="1" width="3.2" height="12" fill="#e6e8dc"/><path d="M10 1.8 L15.2 7 L10 12.2" fill="none" stroke="#e6e8dc" stroke-width="3.4"/><rect x="3" y="5.6" width="11" height="2.8" fill="#e6e8dc"/></svg>
<svg class="a" style="left:2146px;top:752px;" width="16" height="23" viewBox="0 0 16 23"><path d="M6 0.5 L11 11.5 L6 22.5 L1 11.5 Z" fill="#3b7fe0"/><path d="M10 5 H14.5 V18 H10" fill="none" stroke="#c8ccc8" stroke-width="2.2"/></svg>
<svg class="a" style="left:2170px;top:752px;" width="13" height="23" viewBox="0 0 13 23"><path d="M6.5 1 L12 11.5 L6.5 22 L1 11.5 Z" fill="none" stroke="#8a8e92" stroke-width="1.3"/></svg>
<svg class="a" style="left:2192px;top:752px;" width="16" height="23" viewBox="0 0 16 23"><path d="M10 0.5 L15 11.5 L10 22.5 L5 11.5 Z" fill="#3b7fe0"/><path d="M6 5 H1.5 V18 H6" fill="none" stroke="#c8ccc8" stroke-width="2.2"/></svg>
<svg class="a" style="left:2220px;top:756px;" width="13" height="15" viewBox="0 0 13 15"><path d="M0.5 5 L6.5 0.5 L12.5 5 V14.5 H0.5 Z" fill="#4a9a48" stroke="#111" stroke-width="1"/></svg>
<svg class="a" style="left:2252px;top:755px;" width="25" height="17" viewBox="0 0 25 17"><rect x="0" y="0" width="25" height="2" fill="#c8ccd0"/><rect x="0" y="15" width="25" height="2" fill="#c8ccd0"/><rect x="1" y="2" width="1" height="13" fill="#888"/><rect x="23" y="2" width="1" height="13" fill="#888"/><path d="M12.5 13 V5 M8.5 8 L12.5 3.5 L16.5 8" stroke="#e0242a" stroke-width="2" fill="none"/></svg>
<svg class="a" style="left:2287px;top:755px;" width="26" height="17" viewBox="0 0 26 17"><rect x="0" y="0" width="26" height="2" fill="#c8ccd0"/><rect x="0" y="15" width="26" height="2" fill="#c8ccd0"/><rect x="12.5" y="2" width="1" height="13" fill="#888"/><path d="M2 8.5 H10 M7 5.5 L10.5 8.5 L7 11.5 M24 8.5 H16 M19 5.5 L15.5 8.5 L19 11.5" stroke="#e0242a" stroke-width="2" fill="none"/></svg>
<svg class="a" style="left:2329px;top:752px;" width="14" height="22" viewBox="0 0 14 22"><rect x="4" y="1" width="6" height="13" rx="3" fill="#3d88c0"/><path d="M2 10 Q2 16 7 16 Q12 16 12 10" fill="none" stroke="#3d88c0" stroke-width="1.5"/><path d="M7 16 V20 M4 20.5 H10" stroke="#3d88c0" stroke-width="1.5"/></svg>
<svg class="a" style="left:2460px;top:753px;" width="20" height="19" viewBox="0 0 20 19"><path d="M4 17 V9 Q4 2 10 2 Q16 2 16 9 V17" fill="none" stroke="#e6e8dc" stroke-width="2.5"/><path d="M0 12 L4 18 L8 12 Z" fill="#e6e8dc"/></svg>
<svg class="a" style="left:2488px;top:753px;" width="20" height="19" viewBox="0 0 20 19"><path d="M4 17 V9 Q4 2 10 2 Q16 2 16 9 V17" fill="none" stroke="#e6e8dc" stroke-width="2.5"/><path d="M12 12 L16 18 L20 12 Z" fill="#e6e8dc"/></svg>
<div class="a" style="left:357px;top:818px;width:2167px;height:594px;background:#282c31;border:1px solid #343a40;border-top-color:#30353a"></div>
<svg class="a" style="left:403px;top:834px;" width="17" height="17" viewBox="0 0 17 17"><circle cx="9" cy="7.5" r="5.6" fill="none" stroke="#b4b8bc" stroke-width="1.8"/><path d="M5 11.5 L1.5 15" stroke="#b4b8bc" stroke-width="2.4" stroke-linecap="round"/><path d="M6.3 7.5 H11.7" stroke="#b4b8bc" stroke-width="1.6"/><path d="M9 4.8 V10.2" stroke="#b4b8bc" stroke-width="1.6"/></svg>
<svg class="a" style="left:427px;top:834px;" width="17" height="17" viewBox="0 0 17 17"><circle cx="9" cy="7.5" r="5.6" fill="none" stroke="#b4b8bc" stroke-width="1.8"/><path d="M5 11.5 L1.5 15" stroke="#b4b8bc" stroke-width="2.4" stroke-linecap="round"/><path d="M6.3 7.5 H11.7" stroke="#b4b8bc" stroke-width="1.6"/></svg>
<div class="a" style="left:453px;top:829px;width:2060px;height:28px;background:#1b1e22"></div>
<div class="a" style="left:453px;top:829px;width:2060px;height:28px;overflow:hidden">
<div class="a" style="left:-125.7px;top:3px;width:1.5px;height:25px;background:#3a3f45"></div>
<div class="a" style="left:-84.4px;top:22px;width:1px;height:5px;background:#3a3e44"></div>
<div class="a" style="left:-43.1px;top:22px;width:1px;height:5px;background:#3a3e44"></div>
<div class="a" style="left:-1.8px;top:22px;width:1px;height:5px;background:#3a3e44"></div>
<div class="a t rl" style="left:-119.7px;top:7.32px;font-size:13.8px;line-height:13.8px">01:00:01+00</div>
<div class="a" style="left:39.5px;top:3px;width:1.5px;height:25px;background:#3a3f45"></div>
<div class="a" style="left:80.8px;top:22px;width:1px;height:5px;background:#3a3e44"></div>
<div class="a" style="left:122.1px;top:22px;width:1px;height:5px;background:#3a3e44"></div>
<div class="a" style="left:163.4px;top:22px;width:1px;height:5px;background:#3a3e44"></div>
<div class="a t rl" style="left:45.5px;top:7.32px;font-size:13.8px;line-height:13.8px">01:00:02+00</div>
<div class="a" style="left:204.7px;top:3px;width:1.5px;height:25px;background:#3a3f45"></div>
<div class="a" style="left:246.0px;top:22px;width:1px;height:5px;background:#3a3e44"></div>
<div class="a" style="left:287.3px;top:22px;width:1px;height:5px;background:#3a3e44"></div>
<div class="a" style="left:328.6px;top:22px;width:1px;height:5px;background:#3a3e44"></div>
<div class="a t rl" style="left:210.7px;top:7.32px;font-size:13.8px;line-height:13.8px">01:00:03+00</div>
<div class="a" style="left:369.9px;top:3px;width:1.5px;height:25px;background:#3a3f45"></div>
<div class="a" style="left:411.2px;top:22px;width:1px;height:5px;background:#3a3e44"></div>
<div class="a" style="left:452.5px;top:22px;width:1px;height:5px;background:#3a3e44"></div>
<div class="a" style="left:493.8px;top:22px;width:1px;height:5px;background:#3a3e44"></div>
<div class="a t rl" style="left:375.9px;top:7.32px;font-size:13.8px;line-height:13.8px">01:00:04+00</div>
<div class="a" style="left:535.1px;top:3px;width:1.5px;height:25px;background:#3a3f45"></div>
<div class="a" style="left:576.4px;top:22px;width:1px;height:5px;background:#3a3e44"></div>
<div class="a" style="left:617.7px;top:22px;width:1px;height:5px;background:#3a3e44"></div>
<div class="a" style="left:659.0px;top:22px;width:1px;height:5px;background:#3a3e44"></div>
<div class="a t rl" style="left:541.1px;top:7.32px;font-size:13.8px;line-height:13.8px">01:00:05+00</div>
<div class="a" style="left:700.3px;top:3px;width:1.5px;height:25px;background:#3a3f45"></div>
<div class="a" style="left:741.6px;top:22px;width:1px;height:5px;background:#3a3e44"></div>
<div class="a" style="left:782.9px;top:22px;width:1px;height:5px;background:#3a3e44"></div>
<div class="a" style="left:824.2px;top:22px;width:1px;height:5px;background:#3a3e44"></div>
<div class="a t rl" style="left:706.3px;top:7.32px;font-size:13.8px;line-height:13.8px">01:00:06+00</div>
<div class="a" style="left:865.5px;top:3px;width:1.5px;height:25px;background:#3a3f45"></div>
<div class="a" style="left:906.8px;top:22px;width:1px;height:5px;background:#3a3e44"></div>
<div class="a" style="left:948.1px;top:22px;width:1px;height:5px;background:#3a3e44"></div>
<div class="a" style="left:989.4px;top:22px;width:1px;height:5px;background:#3a3e44"></div>
<div class="a t rl" style="left:871.5px;top:7.32px;font-size:13.8px;line-height:13.8px">01:00:07+00</div>
<div class="a" style="left:1030.7px;top:3px;width:1.5px;height:25px;background:#3a3f45"></div>
<div class="a" style="left:1072.0px;top:22px;width:1px;height:5px;background:#3a3e44"></div>
<div class="a" style="left:1113.3px;top:22px;width:1px;height:5px;background:#3a3e44"></div>
<div class="a" style="left:1154.6px;top:22px;width:1px;height:5px;background:#3a3e44"></div>
<div class="a t rl" style="left:1036.7px;top:7.32px;font-size:13.8px;line-height:13.8px">01:00:08+00</div>
<div class="a" style="left:1195.9px;top:3px;width:1.5px;height:25px;background:#3a3f45"></div>
<div class="a" style="left:1237.2px;top:22px;width:1px;height:5px;background:#3a3e44"></div>
<div class="a" style="left:1278.5px;top:22px;width:1px;height:5px;background:#3a3e44"></div>
<div class="a" style="left:1319.8px;top:22px;width:1px;height:5px;background:#3a3e44"></div>
<div class="a t rl" style="left:1201.9px;top:7.32px;font-size:13.8px;line-height:13.8px">01:00:09+00</div>
<div class="a" style="left:1361.1px;top:3px;width:1.5px;height:25px;background:#3a3f45"></div>
<div class="a" style="left:1402.4px;top:22px;width:1px;height:5px;background:#3a3e44"></div>
<div class="a" style="left:1443.7px;top:22px;width:1px;height:5px;background:#3a3e44"></div>
<div class="a" style="left:1485.0px;top:22px;width:1px;height:5px;background:#3a3e44"></div>
<div class="a t rl" style="left:1367.1px;top:7.32px;font-size:13.8px;line-height:13.8px">01:00:10+00</div>
<div class="a" style="left:1526.3px;top:3px;width:1.5px;height:25px;background:#3a3f45"></div>
<div class="a" style="left:1567.6px;top:22px;width:1px;height:5px;background:#3a3e44"></div>
<div class="a" style="left:1608.9px;top:22px;width:1px;height:5px;background:#3a3e44"></div>
<div class="a" style="left:1650.2px;top:22px;width:1px;height:5px;background:#3a3e44"></div>
<div class="a t rl" style="left:1532.3px;top:7.32px;font-size:13.8px;line-height:13.8px">01:00:11+00</div>
<div class="a" style="left:1691.5px;top:3px;width:1.5px;height:25px;background:#3a3f45"></div>
<div class="a" style="left:1732.8px;top:22px;width:1px;height:5px;background:#3a3e44"></div>
<div class="a" style="left:1774.1px;top:22px;width:1px;height:5px;background:#3a3e44"></div>
<div class="a" style="left:1815.4px;top:22px;width:1px;height:5px;background:#3a3e44"></div>
<div class="a t rl" style="left:1697.5px;top:7.32px;font-size:13.8px;line-height:13.8px">01:00:12+00</div>
<div class="a" style="left:1856.7px;top:3px;width:1.5px;height:25px;background:#3a3f45"></div>
<div class="a" style="left:1898.0px;top:22px;width:1px;height:5px;background:#3a3e44"></div>
<div class="a" style="left:1939.3px;top:22px;width:1px;height:5px;background:#3a3e44"></div>
<div class="a" style="left:1980.6px;top:22px;width:1px;height:5px;background:#3a3e44"></div>
<div class="a t rl" style="left:1862.7px;top:7.32px;font-size:13.8px;line-height:13.8px">01:00:13+00</div>
<div class="a" style="left:2021.9px;top:3px;width:1.5px;height:25px;background:#3a3f45"></div>
<div class="a" style="left:2063.2px;top:22px;width:1px;height:5px;background:#3a3e44"></div>
<div class="a" style="left:2104.5px;top:22px;width:1px;height:5px;background:#3a3e44"></div>
<div class="a" style="left:2145.8px;top:22px;width:1px;height:5px;background:#3a3e44"></div>
<div class="a t rl" style="left:2027.9px;top:7.32px;font-size:13.8px;line-height:13.8px">01:00:14+00</div>
<div class="a" style="left:2187.1px;top:3px;width:1.5px;height:25px;background:#3a3f45"></div>
<div class="a" style="left:2228.4px;top:22px;width:1px;height:5px;background:#3a3e44"></div>
<div class="a" style="left:2269.7px;top:22px;width:1px;height:5px;background:#3a3e44"></div>
<div class="a" style="left:2311.0px;top:22px;width:1px;height:5px;background:#3a3e44"></div>
<div class="a t rl" style="left:2193.1px;top:7.32px;font-size:13.8px;line-height:13.8px">01:00:15+00</div>
</div>
<div class="a" style="left:453px;top:857px;width:2060px;height:510px;background:#2e323b"></div>
<div class="a" style="left:453px;top:857px;width:2060px;height:11px;background:#272b30"></div>
<div class="a" style="left:453px;top:868px;width:2060px;height:3px;background:#202328"></div>
<div class="a t tl" style="left:397px;top:893.29px;font-size:16.2px;line-height:16.2px;">V1</div>
<div class="a t tl" style="left:397px;top:955.79px;font-size:16.2px;line-height:16.2px;">V2</div>
<div class="a t tl" style="left:397px;top:1017.79px;font-size:16.2px;line-height:16.2px;">V3</div>
<div class="a t tl" style="left:397px;top:1080.29px;font-size:16.2px;line-height:16.2px;">A1</div>
<div class="a t tl" style="left:397px;top:1142.79px;font-size:16.2px;line-height:16.2px;">A2</div>
<div class="a t tl" style="left:397px;top:1204.79px;font-size:16.2px;line-height:16.2px;">A3</div>
<div class="a t tl" style="left:397px;top:1266.79px;font-size:16.2px;line-height:16.2px;">A4</div>
<div class="a t tl" style="left:397px;top:1328.79px;font-size:16.2px;line-height:16.2px;">A5</div>
<div class="a" style="left:376px;top:1373px;width:64px;height:1.5px;background:#1c1f23"></div>
<div class="a t " style="left:401.5px;top:1382.92px;font-size:12.5px;line-height:12.5px;color:#e8eae6">All</div>
<div class="a" style="left:453px;top:1379.5px;width:2060px;height:21px;background:#1c1f23"></div>
<div class="a" style="left:464px;top:1381px;width:79px;height:17.5px;background:#2f3439;border:1px solid #3a3f45"></div>
<div class="a" style="left:515px;top:1381px;width:2.5px;height:17.5px;background:#d0141a"></div>
<div class="a" style="left:454px;top:871px;width:67px;height:61px;background:#72a083;overflow:hidden;border-right:1px solid #15171a"><div style="position:absolute;left:0;top:0;right:0;height:1px;background:rgba(255,255,255,.25)"></div><div style="position:absolute;left:0.0px;top:2px;right:0;height:7px;background:repeating-linear-gradient(90deg,rgba(0,0,0,.10) 0 1px,transparent 1px 27.53px)"></div><div style="position:absolute;left:2px;top:37.71px;white-space:nowrap;color:#0d0e11;font-size:15.7px;line-height:15.7px;letter-spacing:-0.25px;-webkit-text-stroke:0.25px #0d0e11">AA5493</div></div>
<div class="a" style="left:521px;top:871px;width:275px;height:61px;background:#a27e72;overflow:hidden;border-right:1px solid #15171a"><div style="position:absolute;left:0;top:0;right:0;height:1px;background:rgba(255,255,255,.25)"></div><div style="position:absolute;left:15.6px;top:2px;right:0;height:7px;background:repeating-linear-gradient(90deg,rgba(0,0,0,.10) 0 1px,transparent 1px 27.53px)"></div><div style="position:absolute;left:10px;top:37.71px;white-space:nowrap;color:#0d0e11;font-size:15.7px;line-height:15.7px;letter-spacing:-0.25px;-webkit-text-stroke:0.25px #0d0e11">AA5496</div></div>
<div class="a" style="left:796px;top:871px;width:110px;height:61px;background:#a0ab80;overflow:hidden;border-right:1px solid #15171a"><div style="position:absolute;left:0;top:0;right:0;height:1px;background:rgba(255,255,255,.25)"></div><div style="position:absolute;left:15.9px;top:2px;right:0;height:7px;background:repeating-linear-gradient(90deg,rgba(0,0,0,.10) 0 1px,transparent 1px 27.53px)"></div><div style="position:absolute;left:10px;top:37.71px;white-space:nowrap;color:#0d0e11;font-size:15.7px;line-height:15.7px;letter-spacing:-0.25px;-webkit-text-stroke:0.25px #0d0e11">AA5685</div></div>
<div class="a" style="left:906px;top:871px;width:69px;height:61px;background:#a9a9a9;overflow:hidden;border-right:1px solid #15171a"><svg style="position:absolute;left:0;top:0" width="69" height="61"><path d="M0 0 L69 61 M69 0 L0 61" stroke="#8c8c8c" stroke-width="1.3"/></svg><div style="position:absolute;left:0;top:0;right:0;height:1px;background:rgba(255,255,255,.25)"></div><div style="position:absolute;left:16.0px;top:2px;right:0;height:7px;background:repeating-linear-gradient(90deg,rgba(0,0,0,.10) 0 1px,transparent 1px 27.53px)"></div><div style="position:absolute;left:10px;top:37.71px;white-space:nowrap;color:#0d0e11;font-size:15.7px;line-height:15.7px;letter-spacing:-0.25px;-webkit-text-stroke:0.25px #0d0e11">Dissolve</div></div>
<div class="a" style="left:975px;top:871px;width:83px;height:61px;background:#a87888;overflow:hidden;border-right:1px solid #15171a"><div style="position:absolute;left:0;top:0;right:0;height:1px;background:rgba(255,255,255,.25)"></div><div style="position:absolute;left:2.1px;top:2px;right:0;height:7px;background:repeating-linear-gradient(90deg,rgba(0,0,0,.10) 0 1px,transparent 1px 27.53px)"></div><div style="position:absolute;left:10px;top:37.71px;white-space:nowrap;color:#0d0e11;font-size:15.7px;line-height:15.7px;letter-spacing:-0.25px;-webkit-text-stroke:0.25px #0d0e11">AA5683</div></div>
<div class="a" style="left:1058px;top:871px;width:55px;height:61px;background:#ac9a76;overflow:hidden;border-right:1px solid #15171a"><div style="position:absolute;left:0;top:0;right:0;height:1px;background:rgba(255,255,255,.25)"></div><div style="position:absolute;left:1.7px;top:2px;right:0;height:7px;background:repeating-linear-gradient(90deg,rgba(0,0,0,.10) 0 1px,transparent 1px 27.53px)"></div><div style="position:absolute;left:10px;top:37.71px;white-space:nowrap;color:#0d0e11;font-size:15.7px;line-height:15.7px;letter-spacing:-0.25px;-webkit-text-stroke:0.25px #0d0e11">AA568</div></div>
<div class="a" style="left:1113px;top:871px;width:206px;height:61px;background:#a9a9a9;overflow:hidden;border-right:1px solid #15171a"><svg style="position:absolute;left:0;top:0" width="206" height="61"><path d="M0 0 L206 61 M206 0 L0 61" stroke="#8c8c8c" stroke-width="1.3"/></svg><div style="position:absolute;left:0;top:0;right:0;height:1px;background:rgba(255,255,255,.25)"></div><div style="position:absolute;left:1.7px;top:2px;right:0;height:7px;background:repeating-linear-gradient(90deg,rgba(0,0,0,.10) 0 1px,transparent 1px 27.53px)"></div><div style="position:absolute;left:10px;top:37.71px;white-space:nowrap;color:#0d0e11;font-size:15.7px;line-height:15.7px;letter-spacing:-0.25px;-webkit-text-stroke:0.25px #0d0e11">Dissolve</div></div>
<div class="a" style="left:1319px;top:871px;width:62px;height:61px;background:#9280b0;overflow:hidden;border-right:1px solid #15171a"><div style="position:absolute;left:0;top:0;right:0;height:1px;background:rgba(255,255,255,.25)"></div><div style="position:absolute;left:16.0px;top:2px;right:0;height:7px;background:repeating-linear-gradient(90deg,rgba(0,0,0,.10) 0 1px,transparent 1px 27.53px)"></div><div style="position:absolute;left:10px;top:37.71px;white-space:nowrap;color:#0d0e11;font-size:15.7px;line-height:15.7px;letter-spacing:-0.25px;-webkit-text-stroke:0.25px #0d0e11">AA5498</div></div>
<div class="a" style="left:1381px;top:871px;width:207px;height:61px;background:#a9a9a9;overflow:hidden;border-right:1px solid #15171a"><svg style="position:absolute;left:0;top:0" width="207" height="61"><path d="M0 0 L207 61 M207 0 L0 61" stroke="#8c8c8c" stroke-width="1.3"/></svg><div style="position:absolute;left:0;top:0;right:0;height:1px;background:rgba(255,255,255,.25)"></div><div style="position:absolute;left:9.0px;top:2px;right:0;height:7px;background:repeating-linear-gradient(90deg,rgba(0,0,0,.10) 0 1px,transparent 1px 27.53px)"></div><div style="position:absolute;left:10px;top:37.71px;white-space:nowrap;color:#0d0e11;font-size:15.7px;line-height:15.7px;letter-spacing:-0.25px;-webkit-text-stroke:0.25px #0d0e11">Dissolve</div></div>
<div class="a" style="left:1588px;top:871px;width:165px;height:61px;background:#a9a9a9;overflow:hidden;border-right:1px solid #15171a"><svg style="position:absolute;left:0;top:0" width="165" height="61"><path d="M0 0 L165 61 M165 0 L0 61" stroke="#8c8c8c" stroke-width="1.3"/></svg><div style="position:absolute;left:0;top:0;right:0;height:1px;background:rgba(255,255,255,.25)"></div><div style="position:absolute;left:22.3px;top:2px;right:0;height:7px;background:repeating-linear-gradient(90deg,rgba(0,0,0,.10) 0 1px,transparent 1px 27.53px)"></div><div style="position:absolute;left:10px;top:37.71px;white-space:nowrap;color:#0d0e11;font-size:15.7px;line-height:15.7px;letter-spacing:-0.25px;-webkit-text-stroke:0.25px #0d0e11">Wipe</div></div>
<div class="a" style="left:1753px;top:871px;width:185px;height:61px;background:#a47aa2;overflow:hidden;border-right:1px solid #15171a"><div style="position:absolute;left:0;top:0;right:0;height:1px;background:rgba(255,255,255,.25)"></div><div style="position:absolute;left:22.4px;top:2px;right:0;height:7px;background:repeating-linear-gradient(90deg,rgba(0,0,0,.10) 0 1px,transparent 1px 27.53px)"></div><div style="position:absolute;left:10px;top:37.71px;white-space:nowrap;color:#0d0e11;font-size:15.7px;line-height:15.7px;letter-spacing:-0.25px;-webkit-text-stroke:0.25px #0d0e11">AA5504</div></div>
<div class="a" style="left:1938px;top:871px;width:575px;height:61px;background:#a67d76;overflow:hidden;border-right:1px solid #15171a"><div style="position:absolute;left:0;top:0;right:0;height:1px;background:rgba(255,255,255,.25)"></div><div style="position:absolute;left:2.6px;top:2px;right:0;height:7px;background:repeating-linear-gradient(90deg,rgba(0,0,0,.10) 0 1px,transparent 1px 27.53px)"></div><div style="position:absolute;left:10px;top:37.71px;white-space:nowrap;color:#0d0e11;font-size:15.7px;line-height:15.7px;letter-spacing:-0.25px;-webkit-text-stroke:0.25px #0d0e11">AA5530</div></div>
<div class="a" style="left:1058px;top:934px;width:880px;height:59px;background:#7892a8;overflow:hidden;border-right:1px solid #15171a"><div style="position:absolute;left:0;top:0;right:0;height:1px;background:rgba(255,255,255,.25)"></div><div style="position:absolute;left:1.7px;top:2px;right:0;height:7px;background:repeating-linear-gradient(90deg,rgba(0,0,0,.10) 0 1px,transparent 1px 27.53px)"></div><div style="position:absolute;left:10px;top:37.71px;white-space:nowrap;color:#0d0e11;font-size:15.7px;line-height:15.7px;letter-spacing:-0.25px;-webkit-text-stroke:0.25px #0d0e11">legacy text</div></div>
<div class="a" style="left:2235px;top:934px;width:179px;height:59px;background:#98a47e;overflow:hidden;border-right:1px solid #15171a"><div style="position:absolute;left:0;top:0;right:0;height:1px;background:rgba(255,255,255,.25)"></div><div style="position:absolute;left:8.5px;top:2px;right:0;height:7px;background:repeating-linear-gradient(90deg,rgba(0,0,0,.10) 0 1px,transparent 1px 27.53px)"></div><div style="position:absolute;left:10px;top:37.71px;white-space:nowrap;color:#0d0e11;font-size:15.7px;line-height:15.7px;letter-spacing:-0.25px;-webkit-text-stroke:0.25px #0d0e11">AA5509</div></div>
<div class="a" style="left:2414px;top:934px;width:99px;height:59px;background:#7ca08e;overflow:hidden;border-right:1px solid #15171a"><div style="position:absolute;left:0;top:0;right:0;height:1px;background:rgba(255,255,255,.25)"></div><div style="position:absolute;left:22.2px;top:2px;right:0;height:7px;background:repeating-linear-gradient(90deg,rgba(0,0,0,.10) 0 1px,transparent 1px 27.53px)"></div><div style="position:absolute;left:10px;top:37.71px;white-space:nowrap;color:#0d0e11;font-size:15.7px;line-height:15.7px;letter-spacing:-0.25px;-webkit-text-stroke:0.25px #0d0e11">AA5508</div></div>
<div class="a" style="left:1381px;top:1058px;width:551px;height:60px;background:#d0d0d0;overflow:hidden;border-right:1px solid #15171a"><div style="position:absolute;left:0;top:0;right:0;height:1px;background:rgba(255,255,255,.25)"></div><div style="position:absolute;left:9.0px;top:2px;right:0;height:7px;background:repeating-linear-gradient(90deg,rgba(0,0,0,.10) 0 1px,transparent 1px 27.53px)"></div><div style="position:absolute;left:0;right:0;top:23px;height:0;border-top:2px dotted rgba(235,235,250,.7)"></div><div style="position:absolute;left:10px;top:37.71px;white-space:nowrap;color:#0d0e11;font-size:15.7px;line-height:15.7px;letter-spacing:-0.25px;-webkit-text-stroke:0.25px #0d0e11">ZD595614 - chriskalhoon - Custom Demo.mp3, A1</div></div>
<div class="a" style="left:2180px;top:1058px;width:333px;height:60px;background:#d0d0d0;overflow:hidden;border-right:1px solid #15171a"><div style="position:absolute;left:0;top:0;right:0;height:1px;background:rgba(255,255,255,.25)"></div><div style="position:absolute;left:8.4px;top:2px;right:0;height:7px;background:repeating-linear-gradient(90deg,rgba(0,0,0,.10) 0 1px,transparent 1px 27.53px)"></div><div style="position:absolute;left:0;right:0;top:23px;height:0;border-top:2px dotted rgba(235,235,250,.7)"></div><div style="position:absolute;left:10px;top:37.71px;white-space:nowrap;color:#0d0e11;font-size:15.7px;line-height:15.7px;letter-spacing:-0.25px;-webkit-text-stroke:0.25px #0d0e11">ZD595614 - chriskalhoon - Custom Demo.mp3, A1</div></div>
<div class="a" style="left:454px;top:1121px;width:2059px;height:59.5px;background:#777aa2;overflow:hidden;border-right:1px solid #15171a"><div style="position:absolute;left:0;top:0;right:0;height:1px;background:rgba(255,255,255,.25)"></div><div style="position:absolute;left:0.0px;top:2px;right:0;height:7px;background:repeating-linear-gradient(90deg,rgba(0,0,0,.10) 0 1px,transparent 1px 27.53px)"></div><div style="position:absolute;left:0;right:0;top:19px;height:0;border-top:2px dotted rgba(235,235,250,.7)"></div><svg style="position:absolute;left:0;top:0" width="2059" height="60"><path d="M0 28.0 L3 26.8 L6 27.0 L9 27.8 L12 27.4 L15 27.5 L18 27.2 L21 26.9 L24 28.0 L27 28.2 L30 26.9 L33 27.5 L36 27.0 L39 28.2 L42 27.5 L45 27.0 L48 27.8 L51 26.7 L54 26.8 L57 28.2 L60 28.2 L63 27.3 L66 26.7 L69 27.6 L72 27.9 L75 27.5 L78 28.2 L81 27.8 L84 27.5 L87 27.4 L90 27.8 L93 27.8 L96 27.8 L99 27.5 L102 27.7 L105 28.2 L108 26.9 L111 27.3 L114 27.2 L117 27.9 L120 26.6 L123 26.8 L126 28.0 L129 27.7 L132 27.0 L135 27.1 L138 26.7 L141 27.5 L144 26.9 L147 27.1 L150 27.7 L153 27.3 L156 26.8 L159 26.8 L162 27.4 L165 27.3 L168 28.1 L171 27.8 L174 26.9 L177 27.5 L180 27.9 L183 27.3 L186 27.1 L189 27.1 L192 27.6 L195 27.5 L198 27.4 L201 27.0 L204 27.4 L207 27.6 L210 27.4 L213 28.2 L216 28.1 L219 27.1 L222 26.6 L225 27.3 L228 27.6 L231 27.9 L234 27.4 L237 26.6 L240 27.0 L243 27.3 L246 26.8 L249 27.8 L252 27.4 L255 26.7 L258 27.3 L261 27.5 L264 27.8 L267 27.3 L270 26.7 L273 28.2 L276 26.9 L279 26.9 L282 26.8 L285 27.0 L288 26.9 L291 27.4 L294 27.3 L297 27.5 L300 28.1 L303 26.8 L306 27.3 L309 27.9 L312 27.4 L315 27.4 L318 27.6 L321 27.6 L324 27.3 L327 27.2 L330 27.2 L333 27.5 L336 28.2 L339 27.8 L342 27.9 L345 27.3 L348 26.8 L351 26.9 L354 26.9 L357 26.9 L360 27.8 L363 26.9 L366 27.1 L369 28.1 L372 28.2 L375 28.2 L378 27.0 L381 27.8 L384 28.0 L387 27.2 L390 27.6 L393 28.1 L396 27.9 L399 27.4 L402 27.9 L405 27.8 L408 27.1 L411 27.5 L414 27.7 L417 27.4 L420 28.2 L423 27.6 L426 27.5 L429 27.9 L432 28.0 L435 26.8 L438 27.4 L441 27.9 L444 27.2 L447 26.9 L450 28.2 L453 28.2 L456 28.0 L459 27.0 L462 27.9 L465 27.1 L468 27.1 L471 27.3 L474 27.8 L477 26.6 L480 26.9 L483 27.4 L486 27.8 L489 27.2 L492 27.6 L495 27.3 L498 27.7 L501 27.2 L504 28.1 L507 27.7 L510 26.7 L513 26.8 L516 27.7 L519 26.8 L522 27.7 L525 26.7 L528 27.0 L531 27.5 L534 27.8 L537 28.2 L540 26.8 L543 28.1 L546 26.9 L549 26.7 L552 27.3 L555 27.9 L558 26.8 L561 26.6 L564 27.1 L567 27.4 L570 27.6 L573 27.6 L576 27.9 L579 27.1 L582 27.5 L585 27.9 L588 28.0 L591 27.1 L594 27.7 L597 27.4 L600 27.7 L603 26.8 L606 26.8 L609 28.2 L612 27.9 L615 27.7 L618 26.6 L621 26.9 L624 27.7 L627 27.9 L630 27.1 L633 26.9 L636 26.7 L639 27.6 L642 26.8 L645 27.1 L648 27.4 L651 26.6 L654 27.8 L657 27.0 L660 28.1 L663 27.9 L666 26.7 L669 27.9 L672 27.0 L675 27.2 L678 26.9 L681 27.6 L684 27.7 L687 27.7 L690 26.8 L693 27.2 L696 26.7 L699 26.8 L702 28.0 L705 27.3 L708 28.0 L711 28.1 L714 28.1 L717 26.8 L720 26.9 L723 26.9 L726 27.7 L729 27.2 L732 26.9 L735 27.6 L738 27.3 L741 27.8 L744 28.1 L747 27.8 L750 26.8 L753 27.3 L756 26.7 L759 27.5 L762 27.8 L765 26.9 L768 26.9 L771 28.2 L774 27.1 L777 28.1 L780 28.0 L783 26.8 L786 28.1 L789 27.8 L792 26.6 L795 27.5 L798 28.0 L801 27.9 L804 27.8 L807 27.0 L810 28.0 L813 26.7 L816 27.6 L819 26.6 L822 26.7 L825 27.7 L828 27.8 L831 27.4 L834 28.0 L837 27.2 L840 28.1 L843 28.2 L846 26.6 L849 27.7 L852 27.2 L855 27.5 L858 27.7 L861 28.1 L864 26.7 L867 26.6 L870 26.6 L873 28.0 L876 27.9 L879 27.2 L882 26.6 L885 27.3 L888 27.1 L891 27.1 L894 27.8 L897 27.3 L900 27.7 L903 27.8 L906 28.1 L909 27.8 L912 26.6 L915 27.5 L918 27.2 L921 27.2 L924 26.7 L927 27.6 L930 27.7 L933 27.7 L936 27.7 L939 26.8 L942 26.8 L945 27.7 L948 27.7 L951 27.3 L954 27.3 L957 27.2 L960 27.8 L963 28.2 L966 27.8 L969 28.1 L972 27.3 L975 28.1 L978 28.1 L981 27.2 L984 27.7 L987 26.9 L990 27.4 L993 26.8 L996 28.0 L999 27.4 L1002 26.9 L1005 28.1 L1008 26.7 L1011 27.9 L1014 27.0 L1017 26.6 L1020 26.9 L1023 27.7 L1026 28.0 L1029 27.4 L1032 26.7 L1035 27.7 L1038 26.8 L1041 28.0 L1044 26.7 L1047 28.1 L1050 27.7 L1053 26.8 L1056 26.9 L1059 26.7 L1062 26.9 L1065 27.0 L1068 27.1 L1071 27.9 L1074 27.5 L1077 27.9 L1080 27.1 L1083 27.1 L1086 27.8 L1089 28.1 L1092 26.7 L1095 26.9 L1098 27.3 L1101 27.3 L1104 26.8 L1107 27.5 L1110 27.6 L1113 27.7 L1116 27.8 L1119 28.2 L1122 27.2 L1125 27.5 L1128 27.3 L1131 28.1 L1134 27.6 L1137 28.0 L1140 28.0 L1143 27.8 L1146 26.9 L1149 27.6 L1152 27.6 L1155 27.2 L1158 27.8 L1161 28.2 L1164 27.4 L1167 27.4 L1170 27.2 L1173 27.5 L1176 27.1 L1179 27.0 L1182 27.8 L1185 27.4 L1188 27.4 L1191 27.8 L1194 27.5 L1197 27.3 L1200 26.7 L1203 26.7 L1206 27.8 L1209 27.2 L1212 28.1 L1215 28.1 L1218 27.4 L1221 26.8 L1224 27.9 L1227 27.0 L1230 26.8 L1233 27.7 L1236 27.1 L1239 26.8 L1242 27.6 L1245 27.1 L1248 27.0 L1251 27.2 L1254 26.8 L1257 26.8 L1260 26.7 L1263 27.3 L1266 27.9 L1269 27.8 L1272 27.9 L1275 27.3 L1278 27.0 L1281 28.1 L1284 27.1 L1287 27.1 L1290 27.6 L1293 27.4 L1296 27.9 L1299 27.0 L1302 28.1 L1305 26.6 L1308 26.9 L1311 27.2 L1314 27.8 L1317 26.7 L1320 26.7 L1323 28.0 L1326 27.0 L1329 26.9 L1332 27.1 L1335 27.1 L1338 27.5 L1341 26.7 L1344 26.6 L1347 27.6 L1350 26.9 L1353 27.5 L1356 27.9 L1359 27.7 L1362 28.0 L1365 26.7 L1368 26.7 L1371 28.0 L1374 27.2 L1377 27.5 L1380 28.0 L1383 27.7 L1386 27.8 L1389 27.0 L1392 28.2 L1395 27.9 L1398 27.5 L1401 28.2 L1404 27.2 L1407 27.2 L1410 26.9 L1413 27.9 L1416 27.7 L1419 27.3 L1422 27.8 L1425 27.3 L1428 27.8 L1431 27.1 L1434 26.9 L1437 26.9 L1440 26.6 L1443 27.3 L1446 27.4 L1449 26.8 L1452 27.0 L1455 27.3 L1458 27.6 L1461 27.7 L1464 28.0 L1467 26.9 L1470 28.0 L1473 27.0 L1476 27.3 L1479 26.7 L1482 27.0 L1485 26.6 L1488 28.0 L1491 27.4 L1494 27.3 L1497 27.7 L1500 27.4 L1503 27.6 L1506 27.4 L1509 28.2 L1512 27.5 L1515 27.5 L1518 27.7 L1521 27.6 L1524 26.9 L1527 27.1 L1530 27.4 L1533 27.2 L1536 27.6 L1539 27.9 L1542 28.2 L1545 27.8 L1548 27.2 L1551 26.8 L1554 26.9 L1557 27.4 L1560 26.6 L1563 27.5 L1566 26.9 L1569 27.5 L1572 27.0 L1575 26.6 L1578 27.7 L1581 27.9 L1584 27.2 L1587 27.4 L1590 27.6 L1593 28.2 L1596 27.6 L1599 27.5 L1602 27.6 L1605 26.8 L1608 27.3 L1611 27.0 L1614 26.8 L1617 27.0 L1620 27.4 L1623 27.0 L1626 27.2 L1629 27.2 L1632 27.2 L1635 27.5 L1638 27.2 L1641 27.2 L1644 26.7 L1647 26.9 L1650 26.8 L1653 27.0 L1656 26.9 L1659 27.2 L1662 27.6 L1665 27.8 L1668 27.1 L1671 26.8 L1674 27.3 L1677 28.0 L1680 26.9 L1683 27.4 L1686 27.5 L1689 28.1 L1692 27.4 L1695 27.0 L1698 27.5 L1701 27.6 L1704 27.1 L1707 28.2 L1710 27.4 L1713 26.7 L1716 27.1 L1719 27.6 L1722 27.1 L1725 27.2 L1728 27.9 L1731 27.9 L1734 26.8 L1737 27.8 L1740 28.1 L1743 26.9 L1746 27.4 L1749 27.6 L1752 27.4 L1755 27.0 L1758 27.9 L1761 27.2 L1764 27.1 L1767 26.9 L1770 27.8 L1773 27.2 L1776 27.8 L1779 27.3 L1782 27.9 L1785 26.9 L1788 26.8 L1791 27.7 L1794 27.8 L1797 26.7 L1800 27.1 L1803 26.8 L1806 28.2 L1809 26.8 L1812 27.2 L1815 27.7 L1818 27.5 L1821 27.0 L1824 26.9 L1827 27.9 L1830 27.2 L1833 27.9 L1836 26.6 L1839 27.5 L1842 26.7 L1845 27.0 L1848 27.2 L1851 27.8 L1854 27.4 L1857 28.0 L1860 28.0 L1863 27.1 L1866 27.6 L1869 27.0 L1872 27.8 L1875 27.1 L1878 27.1 L1881 27.7 L1884 28.0 L1887 27.6 L1890 27.4 L1893 28.0 L1896 27.9 L1899 28.1 L1902 27.2 L1905 26.8 L1908 27.9 L1911 28.1 L1914 27.1 L1917 26.9 L1920 26.7 L1923 27.2 L1926 27.7 L1929 26.9 L1932 28.0 L1935 27.1 L1938 28.0 L1941 27.6 L1944 27.4 L1947 27.6 L1950 27.9 L1953 27.8 L1956 26.9 L1959 27.5 L1962 27.3 L1965 27.9 L1968 27.1 L1971 27.7 L1974 27.3 L1977 26.7 L1980 26.6 L1983 28.1 L1986 26.9 L1989 26.8 L1992 27.7 L1995 27.6 L1998 27.3 L2001 26.7 L2004 27.6 L2007 26.8 L2010 27.0 L2013 28.0 L2016 26.7 L2019 28.2 L2022 28.0 L2025 27.1 L2028 28.1 L2031 27.6 L2034 28.0 L2037 27.5 L2040 26.9 L2043 26.8 L2046 28.1 L2049 28.1 L2052 26.9 L2055 28.1 L2058 27.8 L2061 28.0 L2061 29.9 L2058 30.1 L2055 29.8 L2052 30.9 L2049 29.8 L2046 29.8 L2043 31.0 L2040 30.9 L2037 30.4 L2034 29.9 L2031 30.3 L2028 29.8 L2025 30.7 L2022 29.9 L2019 29.7 L2016 31.0 L2013 29.9 L2010 30.8 L2007 31.0 L2004 30.3 L2001 31.0 L1998 30.6 L1995 30.3 L1992 30.2 L1989 31.0 L1986 30.9 L1983 29.8 L1980 31.2 L1977 31.0 L1974 30.6 L1971 30.2 L1968 30.7 L1965 30.0 L1962 30.6 L1959 30.4 L1956 30.9 L1953 30.1 L1950 30.0 L1947 30.3 L1944 30.4 L1941 30.3 L1938 29.9 L1935 30.7 L1932 29.9 L1929 30.9 L1926 30.2 L1923 30.6 L1920 31.1 L1917 30.9 L1914 30.7 L1911 29.8 L1908 30.0 L1905 31.0 L1902 30.6 L1899 29.8 L1896 30.0 L1893 29.9 L1890 30.4 L1887 30.3 L1884 29.9 L1881 30.2 L1878 30.8 L1875 30.8 L1872 30.1 L1869 30.8 L1866 30.2 L1863 30.8 L1860 29.9 L1857 29.9 L1854 30.5 L1851 30.1 L1848 30.6 L1845 30.8 L1842 31.0 L1839 30.4 L1836 31.1 L1833 30.0 L1830 30.6 L1827 30.0 L1824 30.9 L1821 30.8 L1818 30.3 L1815 30.2 L1812 30.6 L1809 31.0 L1806 29.8 L1803 30.9 L1800 30.7 L1797 31.1 L1794 30.0 L1791 30.2 L1788 31.0 L1785 30.9 L1782 30.0 L1779 30.5 L1776 30.1 L1773 30.6 L1770 30.1 L1767 30.9 L1764 30.7 L1761 30.7 L1758 30.0 L1755 30.8 L1752 30.5 L1749 30.3 L1746 30.5 L1743 30.9 L1740 29.8 L1737 30.1 L1734 31.0 L1731 30.0 L1728 30.0 L1725 30.6 L1722 30.7 L1719 30.3 L1716 30.7 L1713 31.1 L1710 30.5 L1707 29.7 L1704 30.7 L1701 30.2 L1698 30.3 L1695 30.8 L1692 30.5 L1689 29.8 L1686 30.4 L1683 30.4 L1680 30.9 L1677 29.9 L1674 30.5 L1671 31.0 L1668 30.7 L1665 30.1 L1662 30.2 L1659 30.6 L1656 30.9 L1653 30.8 L1650 30.9 L1647 30.8 L1644 31.1 L1641 30.6 L1638 30.6 L1635 30.3 L1632 30.6 L1629 30.7 L1626 30.6 L1623 30.8 L1620 30.4 L1617 30.8 L1614 31.0 L1611 30.8 L1608 30.6 L1605 31.0 L1602 30.3 L1599 30.3 L1596 30.3 L1593 29.7 L1590 30.2 L1587 30.5 L1584 30.6 L1581 30.0 L1578 30.2 L1575 31.1 L1572 30.8 L1569 30.3 L1566 30.9 L1563 30.4 L1560 31.1 L1557 30.5 L1554 30.9 L1551 31.0 L1548 30.6 L1545 30.1 L1542 29.7 L1539 30.0 L1536 30.3 L1533 30.7 L1530 30.4 L1527 30.7 L1524 30.8 L1521 30.3 L1518 30.2 L1515 30.4 L1512 30.4 L1509 29.7 L1506 30.5 L1503 30.2 L1500 30.4 L1497 30.2 L1494 30.5 L1491 30.4 L1488 29.9 L1485 31.1 L1482 30.8 L1479 31.1 L1476 30.5 L1473 30.8 L1470 29.9 L1467 30.9 L1464 29.9 L1461 30.1 L1458 30.3 L1455 30.5 L1452 30.8 L1449 31.0 L1446 30.4 L1443 30.5 L1440 31.1 L1437 30.9 L1434 30.9 L1431 30.7 L1428 30.1 L1425 30.6 L1422 30.1 L1419 30.5 L1416 30.1 L1413 30.0 L1410 30.9 L1407 30.6 L1404 30.6 L1401 29.8 L1398 30.4 L1395 30.0 L1392 29.7 L1389 30.8 L1386 30.1 L1383 30.1 L1380 29.9 L1377 30.3 L1374 30.6 L1371 29.9 L1368 31.1 L1365 31.0 L1362 29.9 L1359 30.2 L1356 30.0 L1353 30.3 L1350 30.9 L1347 30.3 L1344 31.1 L1341 31.1 L1338 30.4 L1335 30.7 L1332 30.7 L1329 30.9 L1326 30.8 L1323 29.9 L1320 31.1 L1317 31.0 L1314 30.1 L1311 30.6 L1308 30.9 L1305 31.1 L1302 29.8 L1299 30.8 L1296 30.0 L1293 30.5 L1290 30.2 L1287 30.8 L1284 30.7 L1281 29.8 L1278 30.8 L1275 30.5 L1272 30.0 L1269 30.1 L1266 30.0 L1263 30.5 L1260 31.1 L1257 31.0 L1254 31.0 L1251 30.6 L1248 30.8 L1245 30.7 L1242 30.3 L1239 30.9 L1236 30.7 L1233 30.2 L1230 31.0 L1227 30.8 L1224 29.9 L1221 31.0 L1218 30.5 L1215 29.8 L1212 29.8 L1209 30.7 L1206 30.1 L1203 31.0 L1200 31.0 L1197 30.5 L1194 30.3 L1191 30.0 L1188 30.4 L1185 30.4 L1182 30.1 L1179 30.8 L1176 30.7 L1173 30.4 L1170 30.7 L1167 30.4 L1164 30.5 L1161 29.7 L1158 30.1 L1155 30.6 L1152 30.3 L1149 30.3 L1146 30.9 L1143 30.1 L1140 29.9 L1137 29.9 L1134 30.2 L1131 29.8 L1128 30.5 L1125 30.3 L1122 30.7 L1119 29.8 L1116 30.1 L1113 30.2 L1110 30.3 L1107 30.4 L1104 30.9 L1101 30.5 L1098 30.5 L1095 30.9 L1092 31.1 L1089 29.8 L1086 30.1 L1083 30.7 L1080 30.7 L1077 29.9 L1074 30.3 L1071 30.0 L1068 30.7 L1065 30.8 L1062 30.9 L1059 31.0 L1056 30.9 L1053 31.0 L1050 30.2 L1047 29.8 L1044 31.0 L1041 29.9 L1038 31.0 L1035 30.1 L1032 31.0 L1029 30.5 L1026 29.9 L1023 30.2 L1020 30.9 L1017 31.1 L1014 30.8 L1011 30.0 L1008 31.1 L1005 29.8 L1002 30.9 L999 30.4 L996 29.9 L993 31.0 L990 30.4 L987 30.9 L984 30.1 L981 30.6 L978 29.8 L975 29.8 L972 30.5 L969 29.8 L966 30.1 L963 29.7 L960 30.1 L957 30.6 L954 30.6 L951 30.5 L948 30.2 L945 30.2 L942 31.0 L939 30.9 L936 30.2 L933 30.2 L930 30.2 L927 30.3 L924 31.1 L921 30.6 L918 30.7 L915 30.4 L912 31.1 L909 30.1 L906 29.8 L903 30.1 L900 30.2 L897 30.5 L894 30.1 L891 30.7 L888 30.7 L885 30.5 L882 31.1 L879 30.6 L876 30.0 L873 29.9 L870 31.1 L867 31.1 L864 31.0 L861 29.8 L858 30.2 L855 30.4 L852 30.6 L849 30.1 L846 31.1 L843 29.7 L840 29.8 L837 30.7 L834 29.9 L831 30.4 L828 30.1 L825 30.1 L822 31.0 L819 31.1 L816 30.3 L813 31.0 L810 29.9 L807 30.8 L804 30.1 L801 30.0 L798 29.9 L795 30.3 L792 31.1 L789 30.1 L786 29.8 L783 31.0 L780 29.9 L777 29.9 L774 30.7 L771 29.7 L768 30.9 L765 30.9 L762 30.1 L759 30.4 L756 31.1 L753 30.5 L750 31.0 L747 30.1 L744 29.8 L741 30.0 L738 30.5 L735 30.3 L732 30.8 L729 30.6 L726 30.2 L723 30.9 L720 30.9 L717 31.0 L714 29.8 L711 29.8 L708 29.9 L705 30.5 L702 29.9 L699 31.0 L696 31.1 L693 30.6 L690 31.0 L687 30.1 L684 30.2 L681 30.3 L678 30.9 L675 30.6 L672 30.8 L669 30.0 L666 31.0 L663 30.0 L660 29.8 L657 30.8 L654 30.1 L651 31.1 L648 30.4 L645 30.7 L642 31.0 L639 30.2 L636 31.1 L633 30.9 L630 30.7 L627 30.0 L624 30.2 L621 30.8 L618 31.1 L615 30.2 L612 30.0 L609 29.7 L606 31.0 L603 31.0 L600 30.2 L597 30.4 L594 30.1 L591 30.7 L588 29.9 L585 30.0 L582 30.3 L579 30.7 L576 30.0 L573 30.2 L570 30.3 L567 30.5 L564 30.7 L561 31.1 L558 31.0 L555 30.0 L552 30.5 L549 31.1 L546 30.9 L543 29.8 L540 31.0 L537 29.7 L534 30.1 L531 30.3 L528 30.8 L525 31.1 L522 30.2 L519 31.0 L516 30.2 L513 31.0 L510 31.1 L507 30.1 L504 29.8 L501 30.6 L498 30.2 L495 30.5 L492 30.3 L489 30.7 L486 30.0 L483 30.5 L480 30.9 L477 31.1 L474 30.0 L471 30.5 L468 30.7 L465 30.7 L462 30.0 L459 30.8 L456 29.9 L453 29.7 L450 29.7 L447 30.9 L444 30.6 L441 30.0 L438 30.5 L435 31.0 L432 29.9 L429 30.0 L426 30.3 L423 30.3 L420 29.8 L417 30.4 L414 30.2 L411 30.4 L408 30.7 L405 30.1 L402 30.0 L399 30.5 L396 29.9 L393 29.8 L390 30.2 L387 30.6 L384 29.9 L381 30.1 L378 30.8 L375 29.7 L372 29.7 L369 29.8 L366 30.7 L363 30.9 L360 30.1 L357 30.9 L354 30.9 L351 30.9 L348 31.0 L345 30.6 L342 30.0 L339 30.1 L336 29.8 L333 30.4 L330 30.6 L327 30.6 L324 30.5 L321 30.2 L318 30.2 L315 30.4 L312 30.4 L309 30.0 L306 30.5 L303 31.0 L300 29.8 L297 30.3 L294 30.5 L291 30.5 L288 30.9 L285 30.8 L282 31.0 L279 30.9 L276 30.8 L273 29.7 L270 31.1 L267 30.5 L264 30.1 L261 30.4 L258 30.6 L255 31.1 L252 30.5 L249 30.1 L246 31.0 L243 30.5 L240 30.8 L237 31.1 L234 30.4 L231 30.0 L228 30.3 L225 30.6 L222 31.1 L219 30.7 L216 29.8 L213 29.8 L210 30.4 L207 30.3 L204 30.5 L201 30.8 L198 30.5 L195 30.4 L192 30.3 L189 30.7 L186 30.7 L183 30.5 L180 30.0 L177 30.3 L174 30.9 L171 30.1 L168 29.8 L165 30.6 L162 30.4 L159 30.9 L156 31.0 L153 30.6 L150 30.2 L147 30.7 L144 30.9 L141 30.3 L138 31.1 L135 30.7 L132 30.8 L129 30.2 L126 29.9 L123 31.0 L120 31.1 L117 30.0 L114 30.6 L111 30.5 L108 30.9 L105 29.8 L102 30.1 L99 30.4 L96 30.0 L93 30.1 L90 30.1 L87 30.4 L84 30.4 L81 30.0 L78 29.8 L75 30.3 L72 30.0 L69 30.3 L66 31.1 L63 30.5 L60 29.8 L57 29.8 L54 31.0 L51 31.1 L48 30.0 L45 30.8 L42 30.4 L39 29.7 L36 30.8 L33 30.3 L30 30.9 L27 29.8 L24 29.9 L21 30.9 L18 30.7 L15 30.4 L12 30.4 L9 30.1 L6 30.8 L3 30.9 L0 29.9 Z" fill="#4e5078"/></svg><div style="position:absolute;left:2px;top:36.21px;white-space:nowrap;color:#0d0e11;font-size:15.7px;line-height:15.7px;letter-spacing:-0.25px;-webkit-text-stroke:0.25px #0d0e11">fighting-for-you-quinn-erwin-musicbed, A1</div></div>
<div class="a" style="left:454px;top:1183px;width:2059px;height:60px;background:#777aa2;overflow:hidden;border-right:1px solid #15171a"><div style="position:absolute;left:0;top:0;right:0;height:1px;background:rgba(255,255,255,.25)"></div><div style="position:absolute;left:0.0px;top:2px;right:0;height:7px;background:repeating-linear-gradient(90deg,rgba(0,0,0,.10) 0 1px,transparent 1px 27.53px)"></div><div style="position:absolute;left:0;right:0;top:19px;height:0;border-top:2px dotted rgba(235,235,250,.7)"></div><svg style="position:absolute;left:0;top:0" width="2059" height="60"><path d="M0 26.1 L3 26.1 L6 27.9 L9 27.8 L12 26.3 L15 26.5 L18 26.7 L21 27.4 L24 26.8 L27 26.8 L30 26.8 L33 27.7 L36 27.1 L39 27.2 L42 26.6 L45 26.0 L48 26.1 L51 26.9 L54 27.1 L57 27.5 L60 27.9 L63 27.9 L66 27.1 L69 27.4 L72 27.2 L75 26.2 L78 26.9 L81 26.9 L84 27.5 L87 28.0 L90 27.3 L93 27.7 L96 27.0 L99 26.0 L102 26.7 L105 27.6 L108 26.2 L111 26.4 L114 26.5 L117 26.2 L120 26.5 L123 26.4 L126 27.3 L129 26.0 L132 26.1 L135 27.7 L138 26.5 L141 26.6 L144 27.1 L147 26.9 L150 27.0 L153 26.2 L156 27.0 L159 26.3 L162 27.3 L165 26.2 L168 26.2 L171 27.1 L174 26.9 L177 26.2 L180 26.6 L183 27.0 L186 27.6 L189 27.4 L192 26.6 L195 27.7 L198 26.2 L201 27.5 L204 26.2 L207 27.4 L210 26.1 L213 26.6 L216 27.0 L219 27.0 L222 26.7 L225 26.8 L228 27.4 L231 27.6 L234 27.0 L237 26.1 L240 26.8 L243 27.8 L246 26.4 L249 26.5 L252 26.2 L255 27.6 L258 26.5 L261 27.9 L264 26.7 L267 27.5 L270 27.5 L273 26.2 L276 27.8 L279 27.0 L282 26.3 L285 27.5 L288 27.6 L291 26.2 L294 27.2 L297 26.6 L300 27.9 L303 27.3 L306 27.7 L309 26.7 L312 27.8 L315 26.1 L318 27.9 L321 26.5 L324 28.0 L327 27.5 L330 26.4 L333 27.7 L336 27.6 L339 26.6 L342 27.2 L345 27.9 L348 26.0 L351 27.7 L354 27.9 L357 27.3 L360 26.8 L363 26.5 L366 27.8 L369 27.3 L372 27.9 L375 27.1 L378 26.5 L381 26.5 L384 26.2 L387 26.5 L390 26.3 L393 26.6 L396 27.1 L399 27.5 L402 26.7 L405 27.4 L408 27.8 L411 27.1 L414 26.3 L417 27.7 L420 26.8 L423 27.2 L426 27.0 L429 27.7 L432 26.1 L435 27.5 L438 26.8 L441 27.2 L444 28.0 L447 26.9 L450 27.7 L453 27.9 L456 27.9 L459 27.7 L462 27.8 L465 26.7 L468 27.0 L471 26.0 L474 26.1 L477 26.0 L480 27.5 L483 27.1 L486 27.5 L489 26.8 L492 26.8 L495 26.4 L498 26.6 L501 27.5 L504 27.2 L507 26.9 L510 28.0 L513 27.9 L516 27.2 L519 27.8 L522 26.6 L525 27.5 L528 27.8 L531 27.6 L534 27.5 L537 27.6 L540 27.0 L543 27.1 L546 27.4 L549 26.7 L552 27.6 L555 26.2 L558 26.1 L561 26.5 L564 27.1 L567 27.0 L570 26.8 L573 27.9 L576 27.2 L579 26.9 L582 27.6 L585 27.8 L588 26.4 L591 27.3 L594 27.0 L597 26.2 L600 26.8 L603 27.4 L606 26.0 L609 27.3 L612 28.0 L615 26.6 L618 27.8 L621 27.4 L624 26.3 L627 26.7 L630 28.0 L633 27.1 L636 27.2 L639 27.0 L642 27.6 L645 26.8 L648 27.9 L651 27.4 L654 27.3 L657 26.1 L660 27.8 L663 26.5 L666 27.6 L669 26.9 L672 27.2 L675 27.1 L678 26.5 L681 27.2 L684 27.8 L687 27.8 L690 27.8 L693 26.3 L696 26.7 L699 26.1 L702 26.6 L705 28.0 L708 26.7 L711 26.4 L714 26.6 L717 27.0 L720 27.3 L723 27.1 L726 26.4 L729 27.5 L732 26.9 L735 27.0 L738 26.1 L741 26.4 L744 26.1 L747 26.3 L750 27.4 L753 27.5 L756 27.0 L759 27.5 L762 27.1 L765 26.6 L768 26.2 L771 26.8 L774 26.4 L777 27.8 L780 27.3 L783 26.0 L786 27.7 L789 27.2 L792 27.9 L795 27.8 L798 26.2 L801 26.0 L804 26.7 L807 27.7 L810 27.4 L813 27.5 L816 26.7 L819 26.6 L822 27.1 L825 27.0 L828 27.8 L831 26.9 L834 26.1 L837 26.5 L840 27.8 L843 27.0 L846 26.6 L849 27.5 L852 26.2 L855 27.1 L858 26.6 L861 27.2 L864 26.0 L867 26.4 L870 26.9 L873 27.7 L876 27.1 L879 27.9 L882 26.8 L885 26.2 L888 27.6 L891 27.0 L894 27.0 L897 27.2 L900 26.6 L903 26.1 L906 26.6 L909 27.1 L912 26.1 L915 27.3 L918 26.5 L921 26.7 L924 26.5 L927 26.3 L930 27.6 L933 26.8 L936 27.2 L939 26.7 L942 26.0 L945 26.7 L948 28.0 L951 27.1 L954 26.6 L957 26.2 L960 26.7 L963 26.4 L966 28.0 L969 26.1 L972 26.5 L975 26.8 L978 26.2 L981 26.2 L984 27.8 L987 26.4 L990 26.5 L993 27.6 L996 26.5 L999 26.8 L1002 27.6 L1005 26.4 L1008 27.7 L1011 26.8 L1014 27.1 L1017 27.5 L1020 26.9 L1023 27.1 L1026 27.6 L1029 26.1 L1032 27.9 L1035 28.0 L1038 27.0 L1041 26.3 L1044 26.7 L1047 26.5 L1050 27.0 L1053 26.7 L1056 27.3 L1059 27.5 L1062 27.0 L1065 27.9 L1068 27.8 L1071 26.5 L1074 27.7 L1077 26.5 L1080 26.4 L1083 27.2 L1086 26.7 L1089 26.4 L1092 26.3 L1095 27.7 L1098 27.7 L1101 27.2 L1104 27.1 L1107 27.4 L1110 28.0 L1113 26.9 L1116 26.1 L1119 27.3 L1122 26.9 L1125 27.2 L1128 27.1 L1131 26.3 L1134 27.4 L1137 26.7 L1140 27.0 L1143 26.9 L1146 26.2 L1149 27.8 L1152 26.4 L1155 27.4 L1158 26.7 L1161 26.4 L1164 26.7 L1167 27.2 L1170 26.3 L1173 27.8 L1176 26.7 L1179 27.2 L1182 26.9 L1185 26.3 L1188 26.4 L1191 26.7 L1194 27.4 L1197 27.5 L1200 27.1 L1203 27.5 L1206 27.4 L1209 26.1 L1212 27.8 L1215 26.4 L1218 27.2 L1221 27.3 L1224 27.4 L1227 27.8 L1230 27.1 L1233 27.7 L1236 27.1 L1239 27.4 L1242 26.2 L1245 26.2 L1248 27.1 L1251 26.7 L1254 26.1 L1257 27.3 L1260 27.8 L1263 27.5 L1266 27.6 L1269 26.6 L1272 27.3 L1275 27.3 L1278 26.4 L1281 27.5 L1284 26.4 L1287 26.7 L1290 27.2 L1293 26.4 L1296 27.3 L1299 26.2 L1302 26.1 L1305 27.0 L1308 26.6 L1311 26.1 L1314 26.5 L1317 26.5 L1320 26.3 L1323 26.1 L1326 26.5 L1329 26.0 L1332 27.4 L1335 26.8 L1338 26.7 L1341 27.3 L1344 27.2 L1347 27.7 L1350 26.1 L1353 27.3 L1356 27.0 L1359 26.2 L1362 27.6 L1365 26.1 L1368 27.7 L1371 27.9 L1374 27.3 L1377 27.3 L1380 26.2 L1383 26.2 L1386 26.5 L1389 27.1 L1392 26.9 L1395 27.5 L1398 26.3 L1401 27.2 L1404 27.4 L1407 26.7 L1410 27.7 L1413 27.4 L1416 26.1 L1419 27.8 L1422 27.7 L1425 27.6 L1428 27.5 L1431 27.2 L1434 27.5 L1437 27.3 L1440 27.5 L1443 27.5 L1446 26.8 L1449 27.3 L1452 27.3 L1455 26.5 L1458 27.9 L1461 27.7 L1464 26.3 L1467 27.1 L1470 26.4 L1473 27.7 L1476 27.0 L1479 26.3 L1482 27.3 L1485 26.5 L1488 26.8 L1491 27.2 L1494 26.0 L1497 27.2 L1500 27.1 L1503 26.8 L1506 27.4 L1509 26.3 L1512 26.8 L1515 26.8 L1518 26.9 L1521 26.0 L1524 26.0 L1527 26.3 L1530 27.1 L1533 27.2 L1536 27.0 L1539 27.9 L1542 25.0 L1545 25.1 L1548 25.1 L1551 25.7 L1554 26.0 L1557 25.6 L1560 25.9 L1563 25.9 L1566 25.4 L1569 25.1 L1572 25.5 L1575 25.9 L1578 25.9 L1581 25.1 L1584 25.5 L1587 25.1 L1590 25.5 L1593 27.7 L1596 27.8 L1599 27.8 L1602 27.6 L1605 27.9 L1608 27.6 L1611 27.2 L1614 26.8 L1617 26.3 L1620 26.2 L1623 26.6 L1626 27.0 L1629 26.2 L1632 27.7 L1635 27.8 L1638 26.4 L1641 26.7 L1644 27.6 L1647 27.2 L1650 27.4 L1653 27.1 L1656 27.1 L1659 27.2 L1662 26.4 L1665 26.4 L1668 26.9 L1671 27.1 L1674 27.4 L1677 26.5 L1680 26.0 L1683 27.5 L1686 26.6 L1689 26.6 L1692 26.7 L1695 27.9 L1698 26.9 L1701 27.6 L1704 27.6 L1707 26.8 L1710 26.7 L1713 26.7 L1716 26.5 L1719 26.6 L1722 27.0 L1725 27.9 L1728 26.5 L1731 26.4 L1734 26.3 L1737 26.8 L1740 27.9 L1743 27.6 L1746 27.8 L1749 26.7 L1752 26.9 L1755 27.6 L1758 26.1 L1761 26.0 L1764 26.2 L1767 27.1 L1770 27.4 L1773 27.6 L1776 26.4 L1779 26.6 L1782 27.4 L1785 26.2 L1788 26.9 L1791 27.2 L1794 27.2 L1797 26.6 L1800 27.1 L1803 26.7 L1806 27.8 L1809 26.6 L1812 27.5 L1815 26.2 L1818 27.6 L1821 27.3 L1824 26.9 L1827 27.2 L1830 26.9 L1833 26.2 L1836 27.6 L1839 26.5 L1842 26.6 L1845 26.4 L1848 27.1 L1851 27.1 L1854 27.3 L1857 27.1 L1860 27.5 L1863 27.6 L1866 27.0 L1869 27.6 L1872 27.1 L1875 26.9 L1878 27.4 L1881 27.7 L1884 26.8 L1887 26.3 L1890 27.6 L1893 26.8 L1896 26.7 L1899 26.2 L1902 26.6 L1905 27.4 L1908 27.6 L1911 26.3 L1914 27.4 L1917 28.0 L1920 26.3 L1923 27.6 L1926 27.4 L1929 27.4 L1932 27.5 L1935 26.6 L1938 27.3 L1941 27.1 L1944 27.2 L1947 26.3 L1950 28.0 L1953 26.8 L1956 27.7 L1959 27.7 L1962 25.6 L1965 25.4 L1968 25.4 L1971 25.2 L1974 25.8 L1977 25.0 L1980 25.8 L1983 25.1 L1986 25.3 L1989 25.8 L1992 25.9 L1995 25.9 L1998 25.6 L2001 25.0 L2004 25.5 L2007 25.8 L2010 25.5 L2013 26.4 L2016 27.8 L2019 26.1 L2022 26.7 L2025 27.9 L2028 26.6 L2031 27.2 L2034 27.0 L2037 27.8 L2040 27.0 L2043 27.0 L2046 26.4 L2049 26.8 L2052 26.6 L2055 26.5 L2058 27.6 L2061 28.0 L2061 29.9 L2058 30.3 L2055 31.2 L2052 31.2 L2049 30.9 L2046 31.3 L2043 30.8 L2040 30.8 L2037 30.1 L2034 30.8 L2031 30.6 L2028 31.2 L2025 30.0 L2022 31.1 L2019 31.6 L2016 30.1 L2013 31.4 L2010 32.2 L2007 31.9 L2004 32.1 L2001 32.6 L1998 32.1 L1995 31.8 L1992 31.8 L1989 31.9 L1986 32.3 L1983 32.5 L1980 31.9 L1977 32.6 L1974 31.8 L1971 32.4 L1968 32.3 L1965 32.2 L1962 32.0 L1959 30.2 L1956 30.1 L1953 30.9 L1950 29.9 L1947 31.4 L1944 30.7 L1941 30.7 L1938 30.5 L1935 31.2 L1932 30.4 L1929 30.5 L1926 30.5 L1923 30.3 L1920 31.5 L1917 29.9 L1914 30.4 L1911 31.4 L1908 30.3 L1905 30.5 L1902 31.1 L1899 31.5 L1896 31.1 L1893 31.0 L1890 30.3 L1887 31.4 L1884 31.0 L1881 30.2 L1878 30.5 L1875 30.9 L1872 30.7 L1869 30.2 L1866 30.8 L1863 30.2 L1860 30.4 L1857 30.8 L1854 30.5 L1851 30.7 L1848 30.7 L1845 31.3 L1842 31.1 L1839 31.3 L1836 30.3 L1833 31.6 L1830 30.8 L1827 30.6 L1824 30.9 L1821 30.5 L1818 30.3 L1815 31.5 L1812 30.4 L1809 31.2 L1806 30.1 L1803 31.1 L1800 30.7 L1797 31.2 L1794 30.6 L1791 30.6 L1788 30.9 L1785 31.5 L1782 30.4 L1779 31.2 L1776 31.4 L1773 30.3 L1770 30.4 L1767 30.7 L1764 31.5 L1761 31.7 L1758 31.6 L1755 30.2 L1752 30.9 L1749 31.0 L1746 30.1 L1743 30.3 L1740 30.0 L1737 31.0 L1734 31.4 L1731 31.4 L1728 31.3 L1725 30.0 L1722 30.8 L1719 31.2 L1716 31.2 L1713 31.0 L1710 31.1 L1707 30.9 L1704 30.2 L1701 30.3 L1698 30.9 L1695 30.0 L1692 31.1 L1689 31.2 L1686 31.2 L1683 30.3 L1680 31.7 L1677 31.3 L1674 30.4 L1671 30.8 L1668 30.9 L1665 31.4 L1662 31.3 L1659 30.6 L1656 30.7 L1653 30.7 L1650 30.4 L1647 30.6 L1644 30.3 L1641 31.0 L1638 31.4 L1635 30.1 L1632 30.2 L1629 31.6 L1626 30.8 L1623 31.2 L1620 31.5 L1617 31.4 L1614 31.0 L1611 30.6 L1608 30.3 L1605 30.0 L1602 30.3 L1599 30.1 L1596 30.1 L1593 30.1 L1590 32.1 L1587 32.5 L1584 32.2 L1581 32.5 L1578 31.8 L1575 31.8 L1572 32.1 L1569 32.5 L1566 32.3 L1563 31.8 L1560 31.8 L1557 32.0 L1554 31.7 L1551 32.0 L1548 32.5 L1545 32.5 L1542 32.6 L1539 30.0 L1536 30.8 L1533 30.6 L1530 30.7 L1527 31.4 L1524 31.7 L1521 31.7 L1518 30.9 L1515 31.0 L1512 31.0 L1509 31.4 L1506 30.5 L1503 31.0 L1500 30.8 L1497 30.6 L1494 31.7 L1491 30.6 L1488 31.0 L1485 31.3 L1482 30.5 L1479 31.4 L1476 30.8 L1473 30.1 L1470 31.3 L1467 30.7 L1464 31.4 L1461 30.2 L1458 30.0 L1455 31.3 L1452 30.6 L1449 30.5 L1446 31.0 L1443 30.3 L1440 30.3 L1437 30.5 L1434 30.4 L1431 30.7 L1428 30.4 L1425 30.3 L1422 30.2 L1419 30.1 L1416 31.6 L1413 30.5 L1410 30.2 L1407 31.0 L1404 30.4 L1401 30.6 L1398 31.4 L1395 30.3 L1392 30.9 L1389 30.7 L1386 31.3 L1383 31.5 L1380 31.6 L1377 30.5 L1374 30.5 L1371 30.0 L1368 30.1 L1365 31.6 L1362 30.2 L1359 31.5 L1356 30.8 L1353 30.5 L1350 31.6 L1347 30.2 L1344 30.6 L1341 30.6 L1338 31.1 L1335 31.0 L1332 30.4 L1329 31.7 L1326 31.3 L1323 31.6 L1320 31.5 L1317 31.3 L1314 31.2 L1311 31.6 L1308 31.1 L1305 30.8 L1302 31.6 L1299 31.5 L1296 30.5 L1293 31.4 L1290 30.6 L1287 31.0 L1284 31.4 L1281 30.3 L1278 31.3 L1275 30.5 L1272 30.6 L1269 31.1 L1266 30.2 L1263 30.3 L1260 30.1 L1257 30.5 L1254 31.6 L1251 31.1 L1248 30.7 L1245 31.6 L1242 31.5 L1239 30.4 L1236 30.7 L1233 30.2 L1230 30.7 L1227 30.0 L1224 30.5 L1221 30.6 L1218 30.6 L1215 31.4 L1212 30.1 L1209 31.6 L1206 30.4 L1203 30.3 L1200 30.7 L1197 30.3 L1194 30.5 L1191 31.0 L1188 31.3 L1185 31.4 L1182 30.9 L1179 30.6 L1176 31.0 L1173 30.1 L1170 31.4 L1167 30.6 L1164 31.1 L1161 31.3 L1158 31.1 L1155 30.4 L1152 31.4 L1149 30.0 L1146 31.5 L1143 30.9 L1140 30.8 L1137 31.1 L1134 30.5 L1131 31.5 L1128 30.7 L1125 30.6 L1122 30.9 L1119 30.6 L1116 31.6 L1113 30.9 L1110 29.9 L1107 30.4 L1104 30.7 L1101 30.6 L1098 30.2 L1095 30.1 L1092 31.5 L1089 31.3 L1086 31.1 L1083 30.6 L1080 31.3 L1077 31.3 L1074 30.2 L1071 31.3 L1068 30.0 L1065 29.9 L1062 30.8 L1059 30.4 L1056 30.5 L1053 31.1 L1050 30.8 L1047 31.3 L1044 31.1 L1041 31.4 L1038 30.8 L1035 29.9 L1032 30.0 L1029 31.6 L1026 30.3 L1023 30.7 L1020 30.9 L1017 30.4 L1014 30.7 L1011 31.0 L1008 30.1 L1005 31.3 L1002 30.2 L999 31.0 L996 31.2 L993 30.3 L990 31.3 L987 31.4 L984 30.1 L981 31.5 L978 31.5 L975 31.0 L972 31.2 L969 31.6 L966 29.9 L963 31.4 L960 31.1 L957 31.5 L954 31.2 L951 30.7 L948 29.9 L945 31.0 L942 31.7 L939 31.1 L936 30.6 L933 31.0 L930 30.3 L927 31.4 L924 31.3 L921 31.1 L918 31.2 L915 30.5 L912 31.6 L909 30.8 L906 31.2 L903 31.6 L900 31.2 L897 30.6 L894 30.8 L891 30.8 L888 30.2 L885 31.5 L882 31.0 L879 30.0 L876 30.7 L873 30.2 L870 30.9 L867 31.3 L864 31.7 L861 30.6 L858 31.2 L855 30.7 L852 31.5 L849 30.4 L846 31.2 L843 30.8 L840 30.1 L837 31.3 L834 31.6 L831 30.9 L828 30.1 L825 30.8 L822 30.7 L819 31.1 L816 31.1 L813 30.3 L810 30.4 L807 30.1 L804 31.1 L801 31.7 L798 31.5 L795 30.1 L792 30.0 L789 30.7 L786 30.2 L783 31.7 L780 30.5 L777 30.1 L774 31.4 L771 31.0 L768 31.6 L765 31.1 L762 30.7 L759 30.4 L756 30.8 L753 30.3 L750 30.4 L747 31.4 L744 31.6 L741 31.3 L738 31.6 L735 30.8 L732 30.8 L729 30.4 L726 31.3 L723 30.7 L720 30.5 L717 30.8 L714 31.2 L711 31.3 L708 31.1 L705 29.9 L702 31.1 L699 31.6 L696 31.1 L693 31.4 L690 30.0 L687 30.1 L684 30.1 L681 30.6 L678 31.3 L675 30.7 L672 30.6 L669 30.9 L666 30.2 L663 31.3 L660 30.0 L657 31.6 L654 30.6 L651 30.4 L648 30.0 L645 31.0 L642 30.3 L639 30.8 L636 30.6 L633 30.7 L630 29.9 L627 31.1 L624 31.4 L621 30.5 L618 30.1 L615 31.1 L612 29.9 L609 30.6 L606 31.7 L603 30.4 L600 31.0 L597 31.6 L594 30.8 L591 30.6 L588 31.3 L585 30.1 L582 30.2 L579 30.8 L576 30.7 L573 30.0 L570 30.9 L567 30.8 L564 30.7 L561 31.2 L558 31.6 L555 31.5 L552 30.3 L549 31.1 L546 30.5 L543 30.7 L540 30.8 L537 30.3 L534 30.3 L531 30.2 L528 30.1 L525 30.3 L522 31.2 L519 30.1 L516 30.6 L513 30.0 L510 29.9 L507 30.8 L504 30.7 L501 30.4 L498 31.2 L495 31.3 L492 31.0 L489 31.0 L486 30.4 L483 30.7 L480 30.3 L477 31.7 L474 31.6 L471 31.7 L468 30.8 L465 31.0 L462 30.1 L459 30.2 L456 30.0 L453 30.0 L450 30.2 L447 30.9 L444 29.9 L441 30.7 L438 31.0 L435 30.4 L432 31.6 L429 30.2 L426 30.8 L423 30.6 L420 31.0 L417 30.1 L414 31.5 L411 30.7 L408 30.1 L405 30.5 L402 31.1 L399 30.3 L396 30.8 L393 31.2 L390 31.5 L387 31.3 L384 31.5 L381 31.2 L378 31.3 L375 30.7 L372 30.0 L369 30.5 L366 30.1 L363 31.2 L360 31.0 L357 30.5 L354 30.0 L351 30.2 L348 31.7 L345 30.0 L342 30.6 L339 31.1 L336 30.2 L333 30.2 L330 31.4 L327 30.4 L324 29.9 L321 31.2 L318 29.9 L315 31.6 L312 30.0 L309 31.1 L306 30.2 L303 30.6 L300 30.0 L297 31.2 L294 30.7 L291 31.5 L288 30.3 L285 30.3 L282 31.4 L279 30.8 L276 30.1 L273 31.5 L270 30.3 L267 30.4 L264 31.1 L261 30.0 L258 31.2 L255 30.2 L252 31.5 L249 31.2 L246 31.4 L243 30.0 L240 31.0 L237 31.6 L234 30.8 L231 30.3 L228 30.5 L225 31.0 L222 31.1 L219 30.8 L216 30.8 L213 31.2 L210 31.6 L207 30.5 L204 31.5 L201 30.4 L198 31.5 L195 30.2 L192 31.2 L189 30.5 L186 30.3 L183 30.8 L180 31.2 L177 31.6 L174 30.9 L171 30.7 L168 31.5 L165 31.5 L162 30.5 L159 31.4 L156 30.8 L153 31.6 L150 30.8 L147 30.9 L144 30.7 L141 31.2 L138 31.3 L135 30.2 L132 31.6 L129 31.7 L126 30.5 L123 31.3 L120 31.3 L117 31.5 L114 31.2 L111 31.3 L108 31.5 L105 30.2 L102 31.1 L99 31.7 L96 30.8 L93 30.1 L90 30.5 L87 29.9 L84 30.3 L81 30.9 L78 30.8 L75 31.5 L72 30.6 L69 30.5 L66 30.7 L63 29.9 L60 30.0 L57 30.4 L54 30.7 L51 30.9 L48 31.6 L45 31.7 L42 31.2 L39 30.6 L36 30.7 L33 30.2 L30 30.9 L27 31.0 L24 31.0 L21 30.5 L18 31.1 L15 31.2 L12 31.4 L9 30.1 L6 30.0 L3 31.6 L0 31.6 Z" fill="#4e5078"/></svg><div style="position:absolute;left:2px;top:36.21px;white-space:nowrap;color:#0d0e11;font-size:15.7px;line-height:15.7px;letter-spacing:-0.25px;-webkit-text-stroke:0.25px #0d0e11">fighting-for-you-quinn-erwin-musicbed, A2</div></div>
<div class="a" style="left:454px;top:1245px;width:692px;height:59px;background:#a47f74;overflow:hidden;border-right:1px solid #15171a"><div style="position:absolute;left:0;top:0;right:0;height:1px;background:rgba(255,255,255,.25)"></div><div style="position:absolute;left:0.0px;top:2px;right:0;height:7px;background:repeating-linear-gradient(90deg,rgba(0,0,0,.10) 0 1px,transparent 1px 27.53px)"></div><div style="position:absolute;left:0;right:0;top:19px;height:0;border-top:2px dotted rgba(235,235,250,.7)"></div><svg style="position:absolute;left:0;top:0" width="692" height="60"><path d="M0 27.1 L3 26.3 L6 26.7 L9 26.1 L12 26.1 L15 27.5 L18 27.7 L21 25.5 L24 27.0 L27 27.1 L30 25.1 L33 26.5 L36 25.5 L39 26.5 L42 26.0 L45 27.3 L48 26.0 L51 25.4 L54 26.3 L57 25.8 L60 26.0 L63 27.5 L66 25.7 L69 26.2 L72 26.9 L75 27.6 L78 25.4 L81 26.5 L84 25.8 L87 25.4 L90 25.8 L93 25.3 L96 26.7 L99 25.6 L102 26.5 L105 25.3 L108 25.4 L111 27.4 L114 27.3 L117 27.1 L120 25.2 L123 26.6 L126 26.1 L129 26.9 L132 26.4 L135 26.7 L138 26.8 L141 26.2 L144 26.2 L147 25.3 L150 25.9 L153 25.3 L156 25.5 L159 25.1 L162 26.0 L165 27.3 L168 25.5 L171 25.2 L174 25.3 L177 26.2 L180 25.8 L183 27.2 L186 25.5 L189 26.2 L192 27.0 L195 27.5 L198 25.5 L201 25.1 L204 27.5 L207 25.6 L210 26.6 L213 27.3 L216 26.9 L219 25.7 L222 25.4 L225 27.6 L228 26.1 L231 27.6 L234 25.8 L237 26.8 L240 25.4 L243 25.2 L246 26.4 L249 25.1 L252 26.5 L255 26.6 L258 26.3 L261 26.5 L264 25.9 L267 25.8 L270 26.3 L273 26.2 L276 26.1 L279 26.1 L282 26.2 L285 26.0 L288 26.4 L291 26.2 L294 26.6 L297 26.1 L300 26.1 L303 26.6 L306 26.2 L309 26.3 L312 26.0 L315 26.6 L318 25.8 L321 26.2 L324 26.3 L327 26.3 L330 26.1 L333 26.3 L336 26.6 L339 26.0 L342 26.4 L345 26.4 L348 26.3 L351 26.5 L354 26.3 L357 26.2 L360 26.5 L363 26.1 L366 26.2 L369 26.5 L372 26.4 L375 25.9 L378 26.4 L381 26.1 L384 26.3 L387 26.4 L390 26.4 L393 26.3 L396 26.3 L399 26.5 L402 25.8 L405 25.8 L408 25.8 L411 26.4 L414 25.9 L417 26.2 L420 26.3 L423 26.5 L426 26.4 L429 26.6 L432 26.0 L435 25.9 L438 26.1 L441 26.0 L444 26.4 L447 26.2 L450 25.8 L453 26.3 L456 25.9 L459 26.0 L462 26.4 L465 25.9 L468 26.0 L471 26.0 L474 26.6 L477 25.9 L480 26.4 L483 26.2 L486 26.2 L489 26.6 L492 26.5 L495 26.5 L498 25.9 L501 26.2 L504 26.3 L507 26.1 L510 26.3 L513 26.3 L516 26.2 L519 26.3 L522 26.5 L525 26.1 L528 26.3 L531 26.1 L534 26.3 L537 26.0 L540 26.0 L543 26.4 L546 26.0 L549 26.3 L552 25.9 L555 26.3 L558 26.0 L561 26.2 L564 25.9 L567 25.9 L570 26.1 L573 26.1 L576 26.1 L579 26.5 L582 26.6 L585 26.5 L588 26.5 L591 25.9 L594 25.9 L597 25.9 L600 26.1 L603 26.6 L606 26.2 L609 26.5 L612 25.9 L615 26.3 L618 25.9 L621 26.5 L624 26.1 L627 26.3 L630 26.3 L633 26.3 L636 26.2 L639 26.3 L642 26.5 L645 26.0 L648 26.2 L651 26.1 L654 26.5 L657 26.0 L660 26.2 L663 26.0 L666 26.4 L669 26.1 L672 26.4 L675 25.8 L678 26.0 L681 25.9 L684 26.4 L687 26.6 L690 26.3 L693 27.3 L693 30.6 L690 31.4 L687 31.2 L684 31.4 L681 31.8 L678 31.7 L675 31.8 L672 31.3 L669 31.6 L666 31.4 L663 31.7 L660 31.5 L657 31.7 L654 31.3 L651 31.6 L648 31.5 L645 31.7 L642 31.3 L639 31.5 L636 31.5 L633 31.5 L630 31.4 L627 31.4 L624 31.6 L621 31.3 L618 31.8 L615 31.4 L612 31.8 L609 31.2 L606 31.5 L603 31.2 L600 31.6 L597 31.8 L594 31.8 L591 31.8 L588 31.3 L585 31.2 L582 31.2 L579 31.3 L576 31.6 L573 31.6 L570 31.6 L567 31.8 L564 31.7 L561 31.5 L558 31.7 L555 31.4 L552 31.8 L549 31.5 L546 31.7 L543 31.3 L540 31.7 L537 31.7 L534 31.4 L531 31.6 L528 31.4 L525 31.6 L522 31.3 L519 31.4 L516 31.6 L513 31.4 L510 31.4 L507 31.6 L504 31.4 L501 31.5 L498 31.8 L495 31.2 L492 31.3 L489 31.2 L486 31.5 L483 31.5 L480 31.4 L477 31.8 L474 31.2 L471 31.7 L468 31.7 L465 31.7 L462 31.3 L459 31.7 L456 31.8 L453 31.4 L450 31.8 L447 31.5 L444 31.4 L441 31.7 L438 31.6 L435 31.8 L432 31.7 L429 31.2 L426 31.4 L423 31.2 L420 31.4 L417 31.5 L414 31.8 L411 31.3 L408 31.8 L405 31.9 L402 31.8 L399 31.3 L396 31.5 L393 31.5 L390 31.4 L387 31.4 L384 31.4 L381 31.6 L378 31.4 L375 31.8 L372 31.3 L369 31.2 L366 31.5 L363 31.6 L360 31.3 L357 31.5 L354 31.4 L351 31.2 L348 31.5 L345 31.3 L342 31.3 L339 31.7 L336 31.2 L333 31.4 L330 31.6 L327 31.4 L324 31.4 L321 31.5 L318 31.9 L315 31.2 L312 31.7 L309 31.4 L306 31.5 L303 31.2 L300 31.6 L297 31.6 L294 31.2 L291 31.5 L288 31.4 L285 31.7 L282 31.5 L279 31.6 L276 31.6 L273 31.5 L270 31.4 L267 31.9 L264 31.8 L261 31.3 L258 31.5 L255 31.2 L252 31.2 L249 32.5 L246 31.4 L243 32.5 L240 32.2 L237 30.9 L234 31.9 L231 30.3 L228 31.6 L225 30.3 L222 32.2 L219 32.0 L216 30.9 L213 30.5 L210 31.1 L207 32.0 L204 30.4 L201 32.5 L198 32.2 L195 30.3 L192 30.8 L189 31.5 L186 32.1 L183 30.7 L180 31.8 L177 31.5 L174 32.3 L171 32.4 L168 32.2 L165 30.6 L162 31.7 L159 32.5 L156 32.2 L153 32.3 L150 31.8 L147 32.3 L144 31.5 L141 31.5 L138 31.0 L135 31.1 L132 31.4 L129 30.9 L126 31.6 L123 31.2 L120 32.4 L117 30.7 L114 30.5 L111 30.4 L108 32.2 L105 32.4 L102 31.2 L99 32.0 L96 31.1 L93 32.3 L90 31.8 L87 32.2 L84 31.9 L81 31.3 L78 32.2 L75 30.2 L72 30.9 L69 31.6 L66 31.9 L63 30.3 L60 31.7 L57 31.9 L54 31.4 L51 32.2 L48 31.7 L45 30.5 L42 31.7 L39 31.3 L36 32.1 L33 31.3 L30 32.5 L27 30.7 L24 30.8 L21 32.1 L18 30.2 L15 30.3 L12 31.6 L9 31.6 L6 31.0 L3 31.4 L0 30.7 Z" fill="#6e524c"/></svg><div style="position:absolute;left:2px;top:36.21px;white-space:nowrap;color:#0d0e11;font-size:15.7px;line-height:15.7px;letter-spacing:-0.25px;-webkit-text-stroke:0.25px #0d0e11">AA5496, A1</div></div>
<div class="a" style="left:1146px;top:1245px;width:166px;height:59px;background:#a9a9a9;overflow:hidden;border-right:1px solid #15171a"><svg style="position:absolute;left:0;top:0" width="166" height="59"><path d="M0 0 L166 59 M166 0 L0 59" stroke="#8c8c8c" stroke-width="1.3"/></svg><div style="position:absolute;left:0;top:0;right:0;height:1px;background:rgba(255,255,255,.25)"></div><div style="position:absolute;left:23.8px;top:2px;right:0;height:7px;background:repeating-linear-gradient(90deg,rgba(0,0,0,.10) 0 1px,transparent 1px 27.53px)"></div><div style="position:absolute;left:10px;top:36.21px;white-space:nowrap;color:#0d0e11;font-size:15.7px;line-height:15.7px;letter-spacing:-0.25px;-webkit-text-stroke:0.25px #0d0e11">Crossfade</div></div>
<div class="a" style="left:1312px;top:1245px;width:173px;height:59px;background:#8e7fad;overflow:hidden;border-right:1px solid #15171a"><div style="position:absolute;left:0;top:0;right:0;height:1px;background:rgba(255,255,255,.25)"></div><div style="position:absolute;left:23.0px;top:2px;right:0;height:7px;background:repeating-linear-gradient(90deg,rgba(0,0,0,.10) 0 1px,transparent 1px 27.53px)"></div><div style="position:absolute;left:0;right:0;top:19px;height:0;border-top:2px dotted rgba(235,235,250,.7)"></div><svg style="position:absolute;left:0;top:0" width="173" height="60"><path d="M0 28.0 L3 28.2 L6 27.7 L9 28.1 L12 28.2 L15 27.7 L18 27.0 L21 27.2 L24 27.2 L27 28.0 L30 27.5 L33 27.9 L36 28.1 L39 28.2 L42 28.0 L45 27.0 L48 27.1 L51 27.2 L54 27.2 L57 28.0 L60 27.9 L63 27.4 L66 27.3 L69 27.1 L72 27.1 L75 28.2 L78 27.5 L81 27.4 L84 27.6 L87 28.1 L90 27.6 L93 28.2 L96 27.0 L99 27.1 L102 27.5 L105 27.9 L108 27.0 L111 27.5 L114 27.1 L117 27.1 L120 27.6 L123 27.7 L126 27.5 L129 27.7 L132 28.1 L135 27.9 L138 27.2 L141 28.2 L144 28.2 L147 27.4 L150 27.9 L153 27.6 L156 27.6 L159 27.8 L162 26.9 L165 28.0 L168 27.7 L171 28.0 L174 27.4 L174 30.4 L171 29.9 L168 30.2 L165 29.9 L162 30.9 L159 30.1 L156 30.2 L153 30.3 L150 30.0 L147 30.4 L144 29.7 L141 29.7 L138 30.7 L135 30.0 L132 29.8 L129 30.2 L126 30.4 L123 30.2 L120 30.3 L117 30.7 L114 30.7 L111 30.4 L108 30.8 L105 30.0 L102 30.3 L99 30.7 L96 30.8 L93 29.7 L90 30.2 L87 29.9 L84 30.3 L81 30.5 L78 30.4 L75 29.7 L72 30.7 L69 30.7 L66 30.6 L63 30.4 L60 30.0 L57 29.9 L54 30.6 L51 30.6 L48 30.7 L45 30.8 L42 29.9 L39 29.8 L36 29.8 L33 30.0 L30 30.3 L27 29.9 L24 30.6 L21 30.6 L18 30.8 L15 30.1 L12 29.7 L9 29.8 L6 30.1 L3 29.8 L0 29.9 Z" fill="#5a4e78"/></svg><div style="position:absolute;left:10px;top:36.21px;white-space:nowrap;color:#0d0e11;font-size:15.7px;line-height:15.7px;letter-spacing:-0.25px;-webkit-text-stroke:0.25px #0d0e11">AA5498, A1</div></div>
<div class="a" style="left:1485px;top:1245px;width:419px;height:59px;background:#a27aa0;overflow:hidden;border-right:1px solid #15171a"><div style="position:absolute;left:0;top:0;right:0;height:1px;background:rgba(255,255,255,.25)"></div><div style="position:absolute;left:15.1px;top:2px;right:0;height:7px;background:repeating-linear-gradient(90deg,rgba(0,0,0,.10) 0 1px,transparent 1px 27.53px)"></div><div style="position:absolute;left:0;right:0;top:19px;height:0;border-top:2px dotted rgba(235,235,250,.7)"></div><svg style="position:absolute;left:0;top:0" width="419" height="60"><path d="M0 27.4 L3 27.3 L6 27.2 L9 27.0 L12 27.3 L15 27.0 L18 28.3 L21 27.6 L24 27.0 L27 27.4 L30 27.0 L33 28.1 L36 27.6 L39 28.0 L42 27.5 L45 27.5 L48 28.3 L51 28.0 L54 27.9 L57 27.0 L60 27.2 L63 28.1 L66 27.2 L69 28.1 L72 27.4 L75 28.1 L78 28.3 L81 27.1 L84 28.0 L87 28.0 L90 26.9 L93 27.1 L96 23.1 L99 23.5 L102 23.1 L105 23.1 L108 27.0 L111 27.9 L114 27.8 L117 28.1 L120 28.1 L123 28.2 L126 27.9 L129 27.5 L132 28.3 L135 27.4 L138 27.8 L141 27.9 L144 27.2 L147 27.6 L150 27.9 L153 27.6 L156 27.3 L159 28.2 L162 26.9 L165 28.3 L168 27.3 L171 27.1 L174 28.3 L177 27.2 L180 26.3 L183 26.7 L186 26.0 L189 26.2 L192 27.0 L195 27.0 L198 27.8 L201 27.8 L204 27.6 L207 27.2 L210 28.1 L213 27.3 L216 27.2 L219 27.1 L222 28.2 L225 27.0 L228 28.2 L231 27.8 L234 27.4 L237 27.0 L240 27.8 L243 27.0 L246 27.5 L249 27.9 L252 27.9 L255 28.1 L258 28.2 L261 28.1 L264 27.3 L267 26.9 L270 28.1 L273 28.2 L276 26.9 L279 27.6 L282 27.7 L285 28.0 L288 27.5 L291 27.1 L294 27.7 L297 27.7 L300 28.2 L303 27.0 L306 28.3 L309 27.6 L312 27.1 L315 28.1 L318 27.3 L321 27.0 L324 27.4 L327 27.2 L330 28.2 L333 27.7 L336 28.1 L339 27.1 L342 27.9 L345 27.7 L348 26.9 L351 27.1 L354 26.9 L357 27.7 L360 27.6 L363 27.3 L366 27.6 L369 27.9 L372 27.7 L375 28.1 L378 27.8 L381 26.9 L384 27.0 L387 27.4 L390 27.6 L393 27.8 L396 28.2 L399 27.9 L402 27.2 L405 27.1 L408 27.8 L411 27.2 L414 27.2 L417 27.3 L420 27.4 L420 30.5 L417 30.5 L414 30.6 L411 30.6 L408 30.1 L405 30.7 L402 30.6 L399 30.0 L396 29.7 L393 30.1 L390 30.3 L387 30.4 L384 30.8 L381 30.9 L378 30.1 L375 29.8 L372 30.1 L369 30.0 L366 30.2 L363 30.5 L360 30.2 L357 30.2 L354 30.9 L351 30.7 L348 30.9 L345 30.2 L342 30.0 L339 30.7 L336 29.8 L333 30.2 L330 29.8 L327 30.6 L324 30.4 L321 30.8 L318 30.6 L315 29.8 L312 30.7 L309 30.3 L306 29.7 L303 30.8 L300 29.7 L297 30.2 L294 30.2 L291 30.7 L288 30.4 L285 29.9 L282 30.1 L279 30.3 L276 30.9 L273 29.7 L270 29.8 L267 30.9 L264 30.5 L261 29.8 L258 29.7 L255 29.9 L252 30.0 L249 30.0 L246 30.3 L243 30.8 L240 30.1 L237 30.8 L234 30.4 L231 30.1 L228 29.7 L225 30.8 L222 29.7 L219 30.7 L216 30.6 L213 30.6 L210 29.8 L207 30.6 L204 30.3 L201 30.1 L198 30.1 L195 30.8 L192 30.8 L189 31.5 L186 31.7 L183 31.1 L180 31.4 L177 30.6 L174 29.7 L171 30.7 L168 30.6 L165 29.7 L162 30.9 L159 29.7 L156 30.5 L153 30.2 L150 30.0 L147 30.2 L144 30.7 L141 30.0 L138 30.1 L135 30.5 L132 29.6 L129 30.4 L126 30.0 L123 29.7 L120 29.8 L117 29.8 L114 30.1 L111 30.0 L108 30.8 L105 34.4 L102 34.3 L99 34.0 L96 34.3 L93 30.7 L90 30.9 L87 29.9 L84 29.9 L81 30.7 L78 29.6 L75 29.8 L72 30.4 L69 29.8 L66 30.6 L63 29.8 L60 30.6 L57 30.8 L54 30.0 L51 29.9 L48 29.6 L45 30.4 L42 30.3 L39 29.9 L36 30.2 L33 29.8 L30 30.8 L27 30.4 L24 30.8 L21 30.2 L18 29.7 L15 30.8 L12 30.6 L9 30.8 L6 30.6 L3 30.6 L0 30.4 Z" fill="#6a4a6a"/></svg><div style="position:absolute;left:10px;top:36.21px;white-space:nowrap;color:#0d0e11;font-size:15.7px;line-height:15.7px;letter-spacing:-0.25px;-webkit-text-stroke:0.25px #0d0e11">AA5504, A1</div></div>
<div class="a" style="left:1904px;top:1245px;width:70px;height:59px;background:#a9a9a9;overflow:hidden;border-right:1px solid #15171a"><svg style="position:absolute;left:0;top:0" width="70" height="59"><path d="M0 0 L70 59 M70 0 L0 59" stroke="#8c8c8c" stroke-width="1.3"/></svg><div style="position:absolute;left:0;top:0;right:0;height:1px;background:rgba(255,255,255,.25)"></div><div style="position:absolute;left:9.1px;top:2px;right:0;height:7px;background:repeating-linear-gradient(90deg,rgba(0,0,0,.10) 0 1px,transparent 1px 27.53px)"></div><div style="position:absolute;left:10px;top:36.21px;white-space:nowrap;color:#0d0e11;font-size:15.7px;line-height:15.7px;letter-spacing:-0.25px;-webkit-text-stroke:0.25px #0d0e11">Crossfad</div></div>
<div class="a" style="left:1974px;top:1245px;width:539px;height:59px;background:#a47f74;overflow:hidden;border-right:1px solid #15171a"><div style="position:absolute;left:0;top:0;right:0;height:1px;background:rgba(255,255,255,.25)"></div><div style="position:absolute;left:21.7px;top:2px;right:0;height:7px;background:repeating-linear-gradient(90deg,rgba(0,0,0,.10) 0 1px,transparent 1px 27.53px)"></div><div style="position:absolute;left:0;right:0;top:19px;height:0;border-top:2px dotted rgba(235,235,250,.7)"></div><svg style="position:absolute;left:0;top:0" width="539" height="60"><path d="M0 22.3 L3 23.3 L6 22.6 L9 22.4 L12 22.4 L15 22.3 L18 23.0 L21 22.6 L24 22.8 L27 23.3 L30 22.6 L33 23.2 L36 22.3 L39 23.0 L42 23.4 L45 23.2 L48 22.7 L51 22.6 L54 22.1 L57 22.8 L60 22.5 L63 22.0 L66 23.1 L69 23.2 L72 23.6 L75 22.8 L78 22.6 L81 26.6 L84 26.9 L87 26.0 L90 27.1 L93 26.9 L96 24.9 L99 25.4 L102 27.5 L105 25.2 L108 27.4 L111 26.5 L114 24.8 L117 25.6 L120 26.6 L123 26.4 L126 26.3 L129 27.1 L132 24.5 L135 27.3 L138 26.2 L141 25.3 L144 26.3 L147 20.1 L150 18.3 L153 18.3 L156 18.5 L159 19.3 L162 18.8 L165 20.5 L168 20.0 L171 18.6 L174 20.7 L177 19.1 L180 20.0 L183 18.2 L186 19.6 L189 19.1 L192 19.4 L195 20.4 L198 19.9 L201 19.9 L204 18.1 L207 19.7 L210 19.9 L213 19.4 L216 18.2 L219 20.7 L222 20.6 L225 18.6 L228 18.8 L231 18.2 L234 24.9 L237 27.3 L240 26.9 L243 24.7 L246 25.7 L249 26.2 L252 25.2 L255 25.1 L258 26.0 L261 26.1 L264 27.2 L267 26.4 L270 27.1 L273 25.6 L276 25.7 L279 27.1 L282 25.6 L285 27.2 L288 27.2 L291 25.6 L294 26.1 L297 24.8 L300 25.6 L303 25.4 L306 27.1 L309 25.0 L312 19.1 L315 18.3 L318 19.5 L321 18.6 L324 18.2 L327 19.5 L330 19.5 L333 18.8 L336 18.5 L339 20.0 L342 20.5 L345 20.0 L348 19.6 L351 20.7 L354 18.5 L357 19.3 L360 20.3 L363 20.6 L366 18.6 L369 18.8 L372 20.5 L375 20.4 L378 19.5 L381 20.5 L384 19.3 L387 19.3 L390 20.0 L393 19.2 L396 20.1 L399 26.8 L402 25.8 L405 24.8 L408 26.2 L411 27.0 L414 26.6 L417 26.8 L420 25.8 L423 25.1 L426 25.8 L429 26.9 L432 26.5 L435 26.4 L438 26.2 L441 26.3 L444 24.5 L447 25.8 L450 25.5 L453 25.4 L456 25.6 L459 25.1 L462 26.4 L465 25.5 L468 24.6 L471 27.0 L474 25.6 L477 20.6 L480 18.7 L483 18.8 L486 19.7 L489 19.3 L492 20.1 L495 18.2 L498 19.5 L501 18.4 L504 18.9 L507 20.4 L510 20.6 L513 18.7 L516 18.7 L519 20.0 L522 20.2 L525 18.6 L528 20.2 L531 20.0 L534 18.7 L537 18.8 L540 18.6 L540 38.3 L537 38.2 L534 38.3 L531 37.1 L528 37.0 L525 38.4 L522 36.9 L519 37.1 L516 38.2 L513 38.3 L510 36.5 L507 36.7 L504 38.1 L501 38.6 L498 37.6 L495 38.7 L492 37.0 L489 37.8 L486 37.3 L483 38.2 L480 38.3 L477 36.6 L474 32.0 L471 30.8 L468 33.0 L465 32.1 L462 31.4 L459 32.5 L456 32.1 L453 32.3 L450 32.1 L447 31.8 L444 33.0 L441 31.4 L438 31.5 L435 31.4 L432 31.2 L429 30.9 L426 31.9 L423 32.5 L420 31.9 L417 31.0 L414 31.2 L411 30.8 L408 31.5 L405 32.8 L402 31.9 L399 30.9 L396 37.0 L393 37.8 L390 37.1 L387 37.7 L384 37.7 L381 36.6 L378 37.6 L375 36.7 L372 36.6 L369 38.2 L366 38.3 L363 36.6 L360 36.9 L357 37.8 L354 38.4 L351 36.5 L348 37.5 L345 37.1 L342 36.6 L339 37.1 L336 38.4 L333 38.2 L330 37.5 L327 37.5 L324 38.8 L321 38.4 L318 37.5 L315 38.7 L312 38.0 L309 32.6 L306 30.7 L303 32.2 L300 32.0 L297 32.8 L294 31.6 L291 32.1 L288 30.6 L285 30.6 L282 32.0 L279 30.7 L276 32.0 L273 32.0 L270 30.7 L267 31.3 L264 30.6 L261 31.6 L258 31.7 L255 32.5 L252 32.5 L249 31.5 L246 32.0 L243 32.9 L240 30.9 L237 30.5 L234 32.7 L231 38.7 L228 38.2 L225 38.3 L222 36.6 L219 36.4 L216 38.7 L213 37.6 L210 37.2 L207 37.4 L204 38.8 L201 37.2 L198 37.2 L195 36.8 L192 37.6 L189 37.9 L186 37.4 L183 38.7 L180 37.1 L177 37.9 L174 36.5 L171 38.4 L168 37.1 L165 36.6 L162 38.2 L159 37.7 L156 38.5 L153 38.6 L150 38.6 L147 37.0 L144 31.4 L141 32.4 L138 31.5 L135 30.5 L132 33.0 L129 30.7 L126 31.4 L123 31.4 L120 31.2 L117 32.0 L114 32.8 L111 31.2 L108 30.4 L105 32.5 L102 30.4 L99 32.2 L96 32.7 L93 30.9 L90 30.7 L87 31.7 L84 30.9 L81 31.2 L78 34.8 L75 34.6 L72 33.9 L69 34.2 L66 34.3 L63 35.3 L60 34.8 L57 34.5 L54 35.2 L51 34.8 L48 34.7 L45 34.2 L42 34.0 L39 34.4 L36 35.0 L33 34.3 L30 34.8 L27 34.1 L24 34.6 L21 34.8 L18 34.4 L15 35.0 L12 34.9 L9 34.9 L6 34.8 L3 34.1 L0 35.0 Z" fill="#6a4e4a"/></svg><div style="position:absolute;left:10px;top:36.21px;white-space:nowrap;color:#0d0e11;font-size:15.7px;line-height:15.7px;letter-spacing:-0.25px;-webkit-text-stroke:0.25px #0d0e11">AA5530, A1</div></div>
<div class="a" style="left:1126px;top:1307px;width:165px;height:60px;background:#a9a9a9;overflow:hidden;border-right:1px solid #15171a"><svg style="position:absolute;left:0;top:0" width="165" height="60"><path d="M0 0 L165 60 M165 0 L0 60" stroke="#8c8c8c" stroke-width="1.3"/></svg><div style="position:absolute;left:0;top:0;right:0;height:1px;background:rgba(255,255,255,.25)"></div><div style="position:absolute;left:16.3px;top:2px;right:0;height:7px;background:repeating-linear-gradient(90deg,rgba(0,0,0,.10) 0 1px,transparent 1px 27.53px)"></div><div style="position:absolute;left:10px;top:36.21px;white-space:nowrap;color:#0d0e11;font-size:15.7px;line-height:15.7px;letter-spacing:-0.25px;-webkit-text-stroke:0.25px #0d0e11">Crossfade</div></div>
<div class="a" style="left:456px;top:1253px;width:15px;height:19px;background:#e01a1e;border:1px solid #f0a0a0"></div>
<div class="a t " style="left:459px;top:1256.15px;font-size:14px;line-height:14px;color:#fff;font-weight:bold">4</div>
<div class="a" style="left:1832.8px;top:857px;width:3px;height:510px;background:#d0141a"></div>
<svg class="a" style="left:1827px;top:831px;" width="16" height="26" viewBox="0 0 16 26"><path d="M8 0 L14 13 L8 26 L2 13 Z" fill="#e0141a"/></svg>
</body></html>
